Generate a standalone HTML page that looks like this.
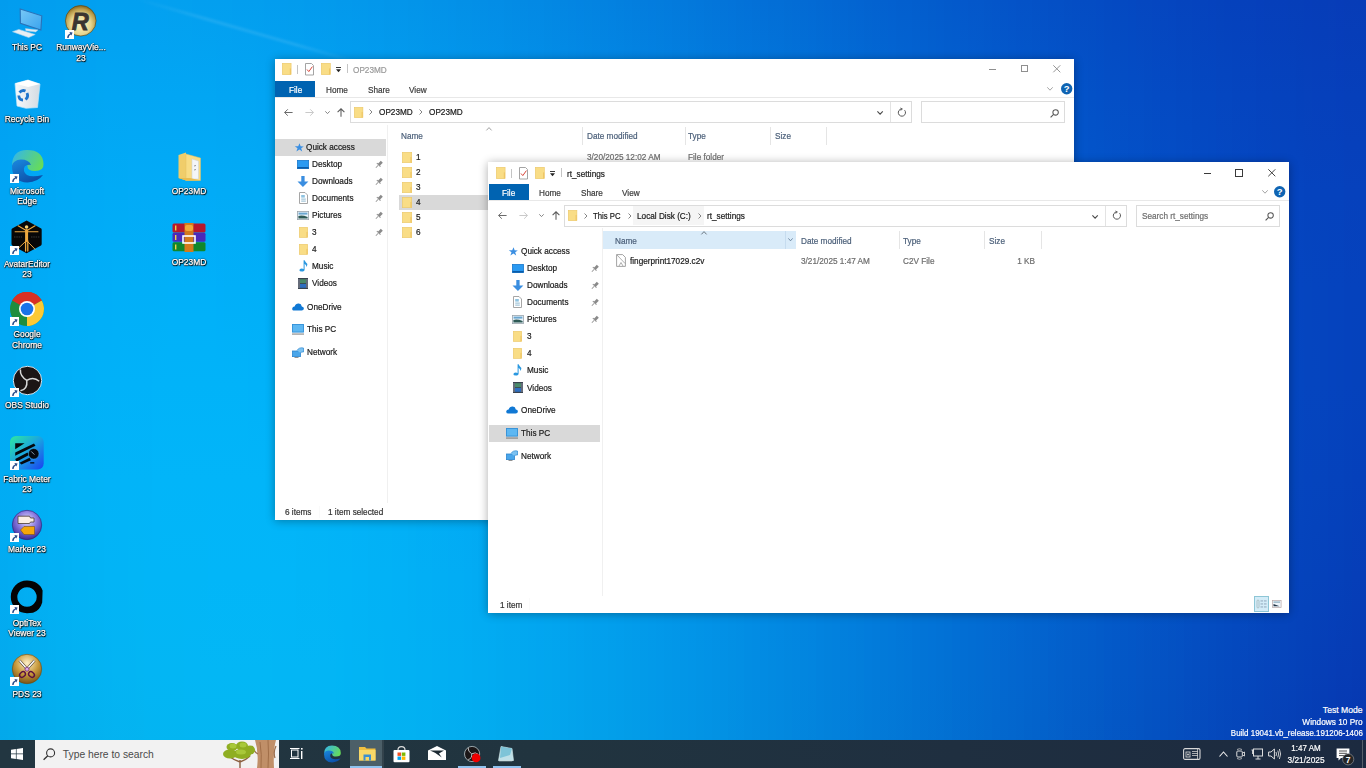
<!DOCTYPE html><html><head><meta charset="utf-8"><title>desktop</title><style>
*{margin:0;padding:0;box-sizing:border-box}
html,body{width:1366px;height:768px;overflow:hidden;position:relative;font-family:"Liberation Sans",sans-serif;background:#0a80e0}
.a{position:absolute}
.bg i{position:absolute;top:0;width:8px;height:768px;display:block}
.t{position:absolute;white-space:nowrap;font-size:8.4px;line-height:10px;color:#1a1a1a;transform:scaleX(.955);transform-origin:0 0;-webkit-text-stroke:0.2px currentColor}
.win{position:absolute;background:#fff}
.dl{position:absolute;color:#fff;font-size:8.7px;line-height:10.5px;text-align:center;white-space:nowrap;
 text-shadow:0 0 1px #000,0 0 1.5px #000,0 1px 1px #000,1px 1px 1px rgba(0,0,0,.8);-webkit-text-stroke:0.25px #fff;transform:scaleX(.97);transform-origin:50% 0}
svg{position:absolute;overflow:visible}
</style></head><body>
<div class="bg">
<i style="left:0px;background:linear-gradient(#029cee 0px,#01a1f2 96px,#01a5f4 192px,#01a9f5 288px,#01abf5 384px,#01acf4 480px,#02abf1 576px,#03aaee 672px,#03a8e9 768px)"></i>
<i style="left:8px;background:linear-gradient(#029def 0px,#01a2f2 96px,#01a6f4 192px,#01a9f5 288px,#01abf5 384px,#01acf4 480px,#02acf2 576px,#03abee 672px,#03a9e9 768px)"></i>
<i style="left:16px;background:linear-gradient(#029def 0px,#01a2f2 96px,#01a7f5 192px,#01aaf6 288px,#01acf6 384px,#01adf4 480px,#02adf2 576px,#03acef 672px,#03aaea 768px)"></i>
<i style="left:24px;background:linear-gradient(#029def 0px,#01a3f2 96px,#01a7f5 192px,#01aaf6 288px,#01adf6 384px,#01aef5 480px,#02aef3 576px,#03adef 672px,#03abea 768px)"></i>
<i style="left:32px;background:linear-gradient(#029eef 0px,#02a3f3 96px,#01a8f5 192px,#01abf6 288px,#01adf6 384px,#01aef5 480px,#02aff3 576px,#03aeef 672px,#03aceb 768px)"></i>
<i style="left:40px;background:linear-gradient(#029eef 0px,#02a4f3 96px,#01a8f5 192px,#01abf6 288px,#01aef7 384px,#01aff5 480px,#02aff3 576px,#03aef0 672px,#03aceb 768px)"></i>
<i style="left:48px;background:linear-gradient(#029eef 0px,#02a4f3 96px,#01a8f5 192px,#01acf7 288px,#01aef7 384px,#01b0f6 480px,#02b0f4 576px,#03aff0 672px,#03adec 768px)"></i>
<i style="left:56px;background:linear-gradient(#029fef 0px,#02a4f3 96px,#01a9f6 192px,#01acf7 288px,#01aff7 384px,#01b0f6 480px,#02b0f4 576px,#03b0f1 672px,#03aeec 768px)"></i>
<i style="left:64px;background:linear-gradient(#029fef 0px,#02a5f3 96px,#01a9f6 192px,#01adf7 288px,#01aff7 384px,#01b1f6 480px,#02b1f4 576px,#03b0f1 672px,#03afed 768px)"></i>
<i style="left:72px;background:linear-gradient(#029fef 0px,#02a5f3 96px,#01aaf6 192px,#01adf7 288px,#01b0f8 384px,#02b1f7 480px,#02b2f5 576px,#03b1f1 672px,#03afed 768px)"></i>
<i style="left:80px;background:linear-gradient(#029ff0 0px,#02a5f3 96px,#01aaf6 192px,#01adf7 288px,#01b0f8 384px,#02b2f7 480px,#02b2f5 576px,#03b2f2 672px,#04b0ed 768px)"></i>
<i style="left:88px;background:linear-gradient(#029ff0 0px,#02a5f3 96px,#01aaf6 192px,#01aef8 288px,#01b0f8 384px,#02b2f7 480px,#02b3f5 576px,#03b2f2 672px,#04b1ee 768px)"></i>
<i style="left:96px;background:linear-gradient(#02a0f0 0px,#02a6f3 96px,#01aaf6 192px,#01aef8 288px,#01b1f8 384px,#02b3f7 480px,#02b3f5 576px,#03b3f2 672px,#04b1ee 768px)"></i>
<i style="left:104px;background:linear-gradient(#02a0f0 0px,#02a6f4 96px,#01abf6 192px,#01aef8 288px,#01b1f8 384px,#02b3f8 480px,#02b4f6 576px,#03b3f3 672px,#04b2ee 768px)"></i>
<i style="left:112px;background:linear-gradient(#02a0f0 0px,#02a6f4 96px,#01abf6 192px,#01aff8 288px,#01b1f8 384px,#02b3f8 480px,#02b4f6 576px,#03b4f3 672px,#04b2ef 768px)"></i>
<i style="left:120px;background:linear-gradient(#02a0f0 0px,#02a6f4 96px,#01abf6 192px,#01aff8 288px,#01b2f9 384px,#02b4f8 480px,#02b4f6 576px,#03b4f3 672px,#04b3ef 768px)"></i>
<i style="left:128px;background:linear-gradient(#02a0f0 0px,#02a6f4 96px,#02abf7 192px,#01aff8 288px,#01b2f9 384px,#02b4f8 480px,#02b5f6 576px,#03b4f3 672px,#04b3ef 768px)"></i>
<i style="left:136px;background:linear-gradient(#02a0f0 0px,#02a6f4 96px,#02abf7 192px,#01aff8 288px,#01b2f9 384px,#02b4f8 480px,#02b5f6 576px,#03b5f3 672px,#04b3ef 768px)"></i>
<i style="left:144px;background:linear-gradient(#03a0f0 0px,#02a6f4 96px,#02abf7 192px,#01aff8 288px,#01b2f9 384px,#02b4f8 480px,#02b5f7 576px,#03b5f4 672px,#03b4f0 768px)"></i>
<i style="left:152px;background:linear-gradient(#03a0f0 0px,#02a6f4 96px,#02abf7 192px,#01aff8 288px,#01b3f9 384px,#02b5f9 480px,#02b5f7 576px,#03b5f4 672px,#03b4f0 768px)"></i>
<i style="left:160px;background:linear-gradient(#03a0f0 0px,#02a6f4 96px,#02abf7 192px,#01b0f8 288px,#01b3f9 384px,#02b5f9 480px,#02b6f7 576px,#03b6f4 672px,#03b5f0 768px)"></i>
<i style="left:168px;background:linear-gradient(#03a0ef 0px,#02a6f4 96px,#02abf7 192px,#01b0f9 288px,#01b3f9 384px,#02b5f9 480px,#02b6f7 576px,#03b6f4 672px,#03b5f0 768px)"></i>
<i style="left:176px;background:linear-gradient(#03a0ef 0px,#02a6f4 96px,#02abf7 192px,#01b0f9 288px,#01b3f9 384px,#02b5f9 480px,#02b6f7 576px,#03b6f4 672px,#03b5f0 768px)"></i>
<i style="left:184px;background:linear-gradient(#03a0ef 0px,#02a6f4 96px,#02abf7 192px,#01b0f9 288px,#01b3f9 384px,#02b5f9 480px,#02b6f7 576px,#03b6f5 672px,#03b5f1 768px)"></i>
<i style="left:192px;background:linear-gradient(#039fef 0px,#02a6f4 96px,#02abf7 192px,#01b0f9 288px,#01b3f9 384px,#02b5f9 480px,#02b6f7 576px,#03b6f5 672px,#03b5f1 768px)"></i>
<i style="left:200px;background:linear-gradient(#039fef 0px,#02a6f3 96px,#02abf7 192px,#01b0f9 288px,#01b3f9 384px,#02b5f9 480px,#02b6f7 576px,#03b7f5 672px,#03b6f1 768px)"></i>
<i style="left:208px;background:linear-gradient(#039fef 0px,#02a6f3 96px,#02abf7 192px,#01b0f9 288px,#01b3f9 384px,#02b5f9 480px,#02b6f8 576px,#03b7f5 672px,#03b6f1 768px)"></i>
<i style="left:216px;background:linear-gradient(#039fef 0px,#02a5f3 96px,#02abf6 192px,#01aff9 288px,#01b3f9 384px,#02b5f9 480px,#02b6f8 576px,#03b7f5 672px,#03b6f1 768px)"></i>
<i style="left:224px;background:linear-gradient(#039fef 0px,#02a5f3 96px,#02abf6 192px,#01aff8 288px,#01b3f9 384px,#02b5f9 480px,#02b6f8 576px,#03b7f5 672px,#03b6f1 768px)"></i>
<i style="left:232px;background:linear-gradient(#039eef 0px,#02a5f3 96px,#02abf6 192px,#01aff8 288px,#01b3f9 384px,#02b5f9 480px,#02b6f8 576px,#03b7f5 672px,#03b6f1 768px)"></i>
<i style="left:240px;background:linear-gradient(#039eee 0px,#02a5f3 96px,#02aaf6 192px,#01aff8 288px,#01b3f9 384px,#02b5f9 480px,#02b6f8 576px,#03b7f5 672px,#03b6f1 768px)"></i>
<i style="left:248px;background:linear-gradient(#039eee 0px,#02a5f3 96px,#02aaf6 192px,#01aff8 288px,#01b2f9 384px,#02b5f9 480px,#02b6f8 576px,#03b7f5 672px,#03b6f1 768px)"></i>
<i style="left:256px;background:linear-gradient(#039eee 0px,#02a4f3 96px,#02aaf6 192px,#01aff8 288px,#01b2f9 384px,#02b5f9 480px,#02b6f8 576px,#03b7f5 672px,#03b6f2 768px)"></i>
<i style="left:264px;background:linear-gradient(#039dee 0px,#02a4f3 96px,#02aaf6 192px,#01aef8 288px,#01b2f9 384px,#02b5f9 480px,#02b6f8 576px,#03b7f5 672px,#03b6f2 768px)"></i>
<i style="left:272px;background:linear-gradient(#039dee 0px,#02a4f2 96px,#02a9f6 192px,#01aef8 288px,#01b2f9 384px,#02b4f9 480px,#02b6f8 576px,#03b6f5 672px,#03b6f2 768px)"></i>
<i style="left:280px;background:linear-gradient(#039cee 0px,#02a3f2 96px,#02a9f6 192px,#01aef8 288px,#01b2f9 384px,#02b4f9 480px,#02b6f8 576px,#03b6f5 672px,#03b6f2 768px)"></i>
<i style="left:288px;background:linear-gradient(#039ced 0px,#02a3f2 96px,#02a9f5 192px,#01aef8 288px,#01b1f9 384px,#02b4f9 480px,#02b6f8 576px,#03b6f5 672px,#03b6f2 768px)"></i>
<i style="left:296px;background:linear-gradient(#039ced 0px,#02a3f2 96px,#02a8f5 192px,#01adf8 288px,#01b1f9 384px,#02b4f9 480px,#02b5f7 576px,#03b6f5 672px,#03b5f2 768px)"></i>
<i style="left:304px;background:linear-gradient(#039bed 0px,#02a2f2 96px,#02a8f5 192px,#01adf7 288px,#01b1f9 384px,#02b3f9 480px,#02b5f7 576px,#03b6f5 672px,#03b5f2 768px)"></i>
<i style="left:312px;background:linear-gradient(#039bed 0px,#02a2f1 96px,#02a8f5 192px,#01adf7 288px,#01b0f8 384px,#02b3f8 480px,#02b5f7 576px,#03b6f5 672px,#03b5f1 768px)"></i>
<i style="left:320px;background:linear-gradient(#039aed 0px,#02a1f1 96px,#02a7f5 192px,#01acf7 288px,#01b0f8 384px,#02b3f8 480px,#02b5f7 576px,#03b5f5 672px,#03b5f1 768px)"></i>
<i style="left:328px;background:linear-gradient(#039aec 0px,#02a1f1 96px,#02a7f5 192px,#01acf7 288px,#01b0f8 384px,#02b3f8 480px,#02b4f7 576px,#03b5f5 672px,#03b5f1 768px)"></i>
<i style="left:336px;background:linear-gradient(#0399ec 0px,#02a0f1 96px,#02a6f4 192px,#01abf7 288px,#01aff8 384px,#02b2f8 480px,#02b4f7 576px,#02b5f5 672px,#03b4f1 768px)"></i>
<i style="left:344px;background:linear-gradient(#0399ec 0px,#02a0f1 96px,#02a6f4 192px,#01abf7 288px,#01aff8 384px,#02b2f8 480px,#02b4f7 576px,#02b4f5 672px,#03b4f1 768px)"></i>
<i style="left:352px;background:linear-gradient(#0398ec 0px,#02a0f0 96px,#02a6f4 192px,#01abf6 288px,#01aff8 384px,#02b1f8 480px,#02b3f7 576px,#02b4f4 672px,#03b4f1 768px)"></i>
<i style="left:360px;background:linear-gradient(#0398eb 0px,#029ff0 96px,#02a5f4 192px,#01aaf6 288px,#01aef7 384px,#02b1f8 480px,#02b3f7 576px,#02b4f4 672px,#03b3f1 768px)"></i>
<i style="left:368px;background:linear-gradient(#0397eb 0px,#029ef0 96px,#02a5f3 192px,#01aaf6 288px,#01aef7 384px,#02b1f7 480px,#02b2f6 576px,#02b3f4 672px,#03b3f1 768px)"></i>
<i style="left:376px;background:linear-gradient(#0397eb 0px,#029ef0 96px,#02a4f3 192px,#01a9f6 288px,#01adf7 384px,#02b0f7 480px,#02b2f6 576px,#02b3f4 672px,#03b3f1 768px)"></i>
<i style="left:384px;background:linear-gradient(#0396ea 0px,#029def 96px,#02a3f3 192px,#01a9f5 288px,#01adf7 384px,#02b0f7 480px,#02b2f6 576px,#02b2f4 672px,#03b2f1 768px)"></i>
<i style="left:392px;background:linear-gradient(#0396ea 0px,#029def 96px,#02a3f3 192px,#01a8f5 288px,#01acf7 384px,#02aff7 480px,#02b1f6 576px,#02b2f4 672px,#03b2f0 768px)"></i>
<i style="left:400px;background:linear-gradient(#0395ea 0px,#029cef 96px,#02a2f2 192px,#01a7f5 288px,#01acf6 384px,#02aff7 480px,#02b1f6 576px,#02b1f3 672px,#03b1f0 768px)"></i>
<i style="left:408px;background:linear-gradient(#0394e9 0px,#029cee 96px,#02a2f2 192px,#01a7f5 288px,#01abf6 384px,#02aef6 480px,#02b0f5 576px,#02b1f3 672px,#03b1f0 768px)"></i>
<i style="left:416px;background:linear-gradient(#0394e9 0px,#029bee 96px,#02a1f2 192px,#01a6f4 288px,#01aaf6 384px,#01adf6 480px,#02aff5 576px,#02b0f3 672px,#03b0f0 768px)"></i>
<i style="left:424px;background:linear-gradient(#0393e9 0px,#029aee 96px,#02a1f2 192px,#01a6f4 288px,#01aaf6 384px,#01adf6 480px,#02aff5 576px,#02b0f3 672px,#03b0f0 768px)"></i>
<i style="left:432px;background:linear-gradient(#0392e9 0px,#029aed 96px,#02a0f1 192px,#01a5f4 288px,#01a9f5 384px,#01acf6 480px,#02aef5 576px,#02aff3 672px,#03afef 768px)"></i>
<i style="left:440px;background:linear-gradient(#0392e8 0px,#0299ed 96px,#029ff1 192px,#01a4f4 288px,#01a9f5 384px,#01acf5 480px,#02aef4 576px,#02aff2 672px,#03afef 768px)"></i>
<i style="left:448px;background:linear-gradient(#0391e8 0px,#0298ed 96px,#029ff1 192px,#01a4f3 288px,#01a8f5 384px,#01abf5 480px,#02adf4 576px,#02aef2 672px,#03aeef 768px)"></i>
<i style="left:456px;background:linear-gradient(#0390e7 0px,#0298ec 96px,#029ef0 192px,#01a3f3 288px,#01a7f4 384px,#01aaf5 480px,#02adf4 576px,#02aef2 672px,#03adef 768px)"></i>
<i style="left:464px;background:linear-gradient(#0390e7 0px,#0297ec 96px,#029df0 192px,#01a2f3 288px,#01a7f4 384px,#01aaf4 480px,#02acf4 576px,#02adf2 672px,#03adee 768px)"></i>
<i style="left:472px;background:linear-gradient(#038fe7 0px,#0296ec 96px,#029df0 192px,#01a2f2 288px,#01a6f4 384px,#01a9f4 480px,#02abf3 576px,#02acf1 672px,#03acee 768px)"></i>
<i style="left:480px;background:linear-gradient(#038ee6 0px,#0295eb 96px,#029cef 192px,#01a1f2 288px,#01a5f3 384px,#01a8f4 480px,#02abf3 576px,#02acf1 672px,#03acee 768px)"></i>
<i style="left:488px;background:linear-gradient(#038de6 0px,#0295eb 96px,#029bef 192px,#01a0f2 288px,#01a5f3 384px,#01a8f4 480px,#02aaf3 576px,#02abf1 672px,#03abee 768px)"></i>
<i style="left:496px;background:linear-gradient(#038de6 0px,#0294eb 96px,#029aef 192px,#01a0f1 288px,#01a4f3 384px,#01a7f3 480px,#02a9f2 576px,#02aaf0 672px,#03aaed 768px)"></i>
<i style="left:504px;background:linear-gradient(#038ce5 0px,#0293ea 96px,#029aee 192px,#019ff1 288px,#01a3f2 384px,#01a6f3 480px,#02a8f2 576px,#02a9f0 672px,#03a9ed 768px)"></i>
<i style="left:512px;background:linear-gradient(#038be5 0px,#0292ea 96px,#0299ee 192px,#019ef1 288px,#01a2f2 384px,#01a6f3 480px,#02a8f2 576px,#02a9f0 672px,#03a9ed 768px)"></i>
<i style="left:520px;background:linear-gradient(#038ae4 0px,#0292ea 96px,#0298ed 192px,#019df0 288px,#01a2f2 384px,#01a5f2 480px,#02a7f1 576px,#02a8ef 672px,#03a8ec 768px)"></i>
<i style="left:528px;background:linear-gradient(#0389e4 0px,#0291e9 96px,#0297ed 192px,#019df0 288px,#01a1f1 384px,#01a4f2 480px,#02a6f1 576px,#02a7ef 672px,#03a7ec 768px)"></i>
<i style="left:536px;background:linear-gradient(#0389e4 0px,#0290e9 96px,#0296ed 192px,#019cef 288px,#01a0f1 384px,#01a3f1 480px,#02a5f1 576px,#02a6ef 672px,#03a6ec 768px)"></i>
<i style="left:544px;background:linear-gradient(#0388e3 0px,#028fe8 96px,#0296ec 192px,#019bef 288px,#019ff1 384px,#01a2f1 480px,#02a5f0 576px,#02a6ee 672px,#03a6eb 768px)"></i>
<i style="left:552px;background:linear-gradient(#0387e3 0px,#028ee8 96px,#0295ec 192px,#019aef 288px,#019ef0 384px,#01a2f1 480px,#02a4f0 576px,#02a5ee 672px,#03a5eb 768px)"></i>
<i style="left:560px;background:linear-gradient(#0386e2 0px,#028ee8 96px,#0294eb 192px,#0199ee 288px,#019ef0 384px,#01a1f0 480px,#02a3f0 576px,#02a4ee 672px,#03a4eb 768px)"></i>
<i style="left:568px;background:linear-gradient(#0385e2 0px,#028de7 96px,#0293eb 192px,#0198ee 288px,#019def 384px,#01a0f0 480px,#02a2ef 576px,#02a3ed 672px,#03a3ea 768px)"></i>
<i style="left:576px;background:linear-gradient(#0384e2 0px,#028ce7 96px,#0292eb 192px,#0198ed 288px,#019cef 384px,#019ff0 480px,#02a1ef 576px,#02a2ed 672px,#03a2ea 768px)"></i>
<i style="left:584px;background:linear-gradient(#0384e1 0px,#028be6 96px,#0291ea 192px,#0197ed 288px,#019bef 384px,#019eef 480px,#02a0ee 576px,#02a1ec 672px,#03a1e9 768px)"></i>
<i style="left:592px;background:linear-gradient(#0383e1 0px,#028ae6 96px,#0291ea 192px,#0196ed 288px,#019aee 384px,#019def 480px,#029fee 576px,#02a0ec 672px,#03a0e9 768px)"></i>
<i style="left:600px;background:linear-gradient(#0382e0 0px,#0289e5 96px,#0290e9 192px,#0195ec 288px,#0199ee 384px,#019cee 480px,#029fee 576px,#02a0ec 672px,#03a0e9 768px)"></i>
<i style="left:608px;background:linear-gradient(#0381e0 0px,#0288e5 96px,#028fe9 192px,#0194ec 288px,#0198ed 384px,#019bee 480px,#029eed 576px,#029feb 672px,#039fe8 768px)"></i>
<i style="left:616px;background:linear-gradient(#0380df 0px,#0288e5 96px,#028ee9 192px,#0193eb 288px,#0197ed 384px,#019bed 480px,#029ded 576px,#029eeb 672px,#039ee8 768px)"></i>
<i style="left:624px;background:linear-gradient(#037fdf 0px,#0287e4 96px,#028de8 192px,#0192eb 288px,#0196ed 384px,#019aed 480px,#029cec 576px,#029dea 672px,#039de7 768px)"></i>
<i style="left:632px;background:linear-gradient(#037ede 0px,#0286e4 96px,#028ce8 192px,#0191ea 288px,#0196ec 384px,#0199ed 480px,#029bec 576px,#029cea 672px,#039ce7 768px)"></i>
<i style="left:640px;background:linear-gradient(#037dde 0px,#0285e3 96px,#028be7 192px,#0190ea 288px,#0195ec 384px,#0198ec 480px,#029aeb 576px,#029be9 672px,#039be6 768px)"></i>
<i style="left:648px;background:linear-gradient(#037cde 0px,#0284e3 96px,#028ae7 192px,#018fea 288px,#0194eb 384px,#0197ec 480px,#0299eb 576px,#029ae9 672px,#039ae6 768px)"></i>
<i style="left:656px;background:linear-gradient(#037cdd 0px,#0283e2 96px,#0289e6 192px,#018fe9 288px,#0193eb 384px,#0196eb 480px,#0298ea 576px,#0299e9 672px,#0399e6 768px)"></i>
<i style="left:664px;background:linear-gradient(#037bdd 0px,#0282e2 96px,#0288e6 192px,#018ee9 288px,#0192ea 384px,#0195eb 480px,#0297ea 576px,#0298e8 672px,#0398e5 768px)"></i>
<i style="left:672px;background:linear-gradient(#037adc 0px,#0281e1 96px,#0287e5 192px,#018de8 288px,#0191ea 384px,#0194ea 480px,#0296e9 576px,#0297e8 672px,#0397e5 768px)"></i>
<i style="left:680px;background:linear-gradient(#0379dc 0px,#0280e1 96px,#0286e5 192px,#018ce8 288px,#0190e9 384px,#0193ea 480px,#0295e9 576px,#0296e7 672px,#0396e4 768px)"></i>
<i style="left:688px;background:linear-gradient(#0378db 0px,#027fe0 96px,#0285e4 192px,#018be7 288px,#018fe9 384px,#0192e9 480px,#0294e9 576px,#0295e7 672px,#0395e4 768px)"></i>
<i style="left:696px;background:linear-gradient(#0377db 0px,#027ee0 96px,#0285e4 192px,#018ae7 288px,#018ee8 384px,#0191e9 480px,#0293e8 576px,#0294e6 672px,#0394e3 768px)"></i>
<i style="left:704px;background:linear-gradient(#0376da 0px,#027ddf 96px,#0284e3 192px,#0189e6 288px,#018de8 384px,#0190e8 480px,#0292e8 576px,#0293e6 672px,#0393e3 768px)"></i>
<i style="left:712px;background:linear-gradient(#0375da 0px,#027cdf 96px,#0283e3 192px,#0188e6 288px,#018ce7 384px,#018fe8 480px,#0291e7 576px,#0292e5 672px,#0392e2 768px)"></i>
<i style="left:720px;background:linear-gradient(#0374d9 0px,#027bde 96px,#0282e2 192px,#0187e5 288px,#018be7 384px,#018ee7 480px,#0290e7 576px,#0291e5 672px,#0391e2 768px)"></i>
<i style="left:728px;background:linear-gradient(#0373d9 0px,#027ade 96px,#0281e2 192px,#0186e5 288px,#018ae6 384px,#018de7 480px,#028fe6 576px,#0290e4 672px,#038fe1 768px)"></i>
<i style="left:736px;background:linear-gradient(#0372d8 0px,#0279dd 96px,#0280e1 192px,#0185e4 288px,#0189e6 384px,#018ce6 480px,#028ee5 576px,#028fe4 672px,#038ee1 768px)"></i>
<i style="left:744px;background:linear-gradient(#0371d8 0px,#0279dd 96px,#027fe1 192px,#0184e4 288px,#0188e5 384px,#018be6 480px,#028de5 576px,#028de3 672px,#038de0 768px)"></i>
<i style="left:752px;background:linear-gradient(#0370d7 0px,#0278dc 96px,#027ee0 192px,#0183e3 288px,#0187e5 384px,#018ae5 480px,#028ce4 576px,#028ce3 672px,#038cdf 768px)"></i>
<i style="left:760px;background:linear-gradient(#036fd7 0px,#0277dc 96px,#027de0 192px,#0182e3 288px,#0186e4 384px,#0189e5 480px,#028ae4 576px,#028be2 672px,#038bdf 768px)"></i>
<i style="left:768px;background:linear-gradient(#036ed6 0px,#0276db 96px,#027cdf 192px,#0181e2 288px,#0185e4 384px,#0188e4 480px,#0289e3 576px,#028ae1 672px,#038ade 768px)"></i>
<i style="left:776px;background:linear-gradient(#036ed6 0px,#0275db 96px,#027bdf 192px,#0180e2 288px,#0184e3 384px,#0186e4 480px,#0288e3 576px,#0289e1 672px,#0389de 768px)"></i>
<i style="left:784px;background:linear-gradient(#036dd5 0px,#0274da 96px,#027ade 192px,#017fe1 288px,#0183e3 384px,#0185e3 480px,#0287e2 576px,#0288e0 672px,#0388dd 768px)"></i>
<i style="left:792px;background:linear-gradient(#036cd5 0px,#0273da 96px,#0279de 192px,#017ee1 288px,#0182e2 384px,#0184e3 480px,#0286e2 576px,#0287e0 672px,#0386dd 768px)"></i>
<i style="left:800px;background:linear-gradient(#036bd4 0px,#0272d9 96px,#0278dd 192px,#017de0 288px,#0180e2 384px,#0183e2 480px,#0285e1 576px,#0286df 672px,#0385dc 768px)"></i>
<i style="left:808px;background:linear-gradient(#036ad4 0px,#0271d9 96px,#0277dd 192px,#017ce0 288px,#017fe1 384px,#0182e1 480px,#0284e1 576px,#0285df 672px,#0384db 768px)"></i>
<i style="left:816px;background:linear-gradient(#0369d3 0px,#0270d8 96px,#0276dc 192px,#017bdf 288px,#017ee1 384px,#0181e1 480px,#0283e0 576px,#0283de 672px,#0383db 768px)"></i>
<i style="left:824px;background:linear-gradient(#0368d3 0px,#026fd8 96px,#0275dc 192px,#017ade 288px,#017de0 384px,#0180e0 480px,#0282df 576px,#0282dd 672px,#0382da 768px)"></i>
<i style="left:832px;background:linear-gradient(#0367d2 0px,#026ed7 96px,#0274db 192px,#0178de 288px,#017cdf 384px,#017fe0 480px,#0281df 576px,#0281dd 672px,#0381da 768px)"></i>
<i style="left:840px;background:linear-gradient(#0366d2 0px,#026dd7 96px,#0273db 192px,#0177dd 288px,#017bdf 384px,#017edf 480px,#027fde 576px,#0280dc 672px,#037fd9 768px)"></i>
<i style="left:848px;background:linear-gradient(#0365d1 0px,#026cd6 96px,#0272da 192px,#0176dd 288px,#017ade 384px,#017ddf 480px,#027ede 576px,#027fdc 672px,#037ed9 768px)"></i>
<i style="left:856px;background:linear-gradient(#0364d1 0px,#026bd6 96px,#0271da 192px,#0275dc 288px,#0179de 384px,#017cde 480px,#027ddd 576px,#027edb 672px,#037dd8 768px)"></i>
<i style="left:864px;background:linear-gradient(#0363d0 0px,#026ad5 96px,#0270d9 192px,#0274dc 288px,#0178dd 384px,#017bde 480px,#027cdd 576px,#027cdb 672px,#037cd7 768px)"></i>
<i style="left:872px;background:linear-gradient(#0362d0 0px,#0269d5 96px,#026fd9 192px,#0273db 288px,#0177dd 384px,#0179dd 480px,#027bdc 576px,#027bda 672px,#037bd7 768px)"></i>
<i style="left:880px;background:linear-gradient(#0361cf 0px,#0268d4 96px,#026ed8 192px,#0272db 288px,#0176dc 384px,#0178dc 480px,#027adb 576px,#027ad9 672px,#0379d6 768px)"></i>
<i style="left:888px;background:linear-gradient(#0360cf 0px,#0367d4 96px,#026dd8 192px,#0271da 288px,#0175dc 384px,#0177dc 480px,#0279db 576px,#0279d9 672px,#0378d5 768px)"></i>
<i style="left:896px;background:linear-gradient(#035fce 0px,#0366d3 96px,#026cd7 192px,#0270da 288px,#0174db 384px,#0276db 480px,#0277da 576px,#0278d8 672px,#0377d5 768px)"></i>
<i style="left:904px;background:linear-gradient(#035fce 0px,#0365d3 96px,#026bd7 192px,#026fd9 288px,#0173da 384px,#0275db 480px,#0276da 576px,#0277d8 672px,#0376d4 768px)"></i>
<i style="left:912px;background:linear-gradient(#035ecd 0px,#0364d2 96px,#026ad6 192px,#026ed9 288px,#0272da 384px,#0274da 480px,#0275d9 576px,#0275d7 672px,#0375d4 768px)"></i>
<i style="left:920px;background:linear-gradient(#035dcd 0px,#0363d2 96px,#0269d5 192px,#026dd8 288px,#0271d9 384px,#0273d9 480px,#0274d8 576px,#0274d6 672px,#0373d3 768px)"></i>
<i style="left:928px;background:linear-gradient(#035ccc 0px,#0362d1 96px,#0268d5 192px,#026cd7 288px,#026fd9 384px,#0272d9 480px,#0273d8 576px,#0273d6 672px,#0372d2 768px)"></i>
<i style="left:936px;background:linear-gradient(#035bcc 0px,#0361d1 96px,#0267d4 192px,#026bd7 288px,#026ed8 384px,#0271d8 480px,#0272d7 576px,#0272d5 672px,#0371d2 768px)"></i>
<i style="left:944px;background:linear-gradient(#035acb 0px,#0360d0 96px,#0266d4 192px,#026ad6 288px,#026dd8 384px,#0270d8 480px,#0271d7 576px,#0271d4 672px,#0370d1 768px)"></i>
<i style="left:952px;background:linear-gradient(#0359cb 0px,#0360d0 96px,#0265d3 192px,#0269d6 288px,#026cd7 384px,#026ed7 480px,#026fd6 576px,#026fd4 672px,#036ed0 768px)"></i>
<i style="left:960px;background:linear-gradient(#0458cb 0px,#035fcf 96px,#0264d3 192px,#0268d5 288px,#026bd6 384px,#026dd7 480px,#026ed5 576px,#026ed3 672px,#036dd0 768px)"></i>
<i style="left:968px;background:linear-gradient(#0457ca 0px,#035ecf 96px,#0263d2 192px,#0267d5 288px,#026ad6 384px,#026cd6 480px,#026dd5 576px,#026dd2 672px,#036ccf 768px)"></i>
<i style="left:976px;background:linear-gradient(#0457ca 0px,#035dce 96px,#0262d2 192px,#0266d4 288px,#0269d5 384px,#026bd5 480px,#026cd4 576px,#026cd2 672px,#036bce 768px)"></i>
<i style="left:984px;background:linear-gradient(#0456c9 0px,#035cce 96px,#0261d1 192px,#0265d4 288px,#0268d5 384px,#026ad5 480px,#026bd4 576px,#036bd1 672px,#036ace 768px)"></i>
<i style="left:992px;background:linear-gradient(#0455c9 0px,#035bcd 96px,#0260d1 192px,#0264d3 288px,#0267d4 384px,#0269d4 480px,#026ad3 576px,#036ad1 672px,#0368cd 768px)"></i>
<i style="left:1000px;background:linear-gradient(#0454c8 0px,#035acd 96px,#025fd0 192px,#0263d2 288px,#0266d4 384px,#0268d4 480px,#0269d2 576px,#0368d0 672px,#0367cc 768px)"></i>
<i style="left:1008px;background:linear-gradient(#0453c8 0px,#0359cc 96px,#025ed0 192px,#0262d2 288px,#0265d3 384px,#0267d3 480px,#0268d2 576px,#0367cf 672px,#0366cc 768px)"></i>
<i style="left:1016px;background:linear-gradient(#0452c7 0px,#0358cc 96px,#025dcf 192px,#0261d1 288px,#0264d2 384px,#0266d2 480px,#0266d1 576px,#0366cf 672px,#0365cb 768px)"></i>
<i style="left:1024px;background:linear-gradient(#0452c7 0px,#0358cb 96px,#025ccf 192px,#0260d1 288px,#0263d2 384px,#0265d2 480px,#0265d0 576px,#0365ce 672px,#0363ca 768px)"></i>
<i style="left:1032px;background:linear-gradient(#0451c6 0px,#0357cb 96px,#035cce 192px,#025fd0 288px,#0262d1 384px,#0264d1 480px,#0264d0 576px,#0364cd 672px,#0362ca 768px)"></i>
<i style="left:1040px;background:linear-gradient(#0450c6 0px,#0356ca 96px,#035bce 192px,#025ed0 288px,#0261d1 384px,#0263d1 480px,#0263cf 576px,#0363cd 672px,#0361c9 768px)"></i>
<i style="left:1048px;background:linear-gradient(#044fc5 0px,#0355ca 96px,#035acd 192px,#025dcf 288px,#0260d0 384px,#0261d0 480px,#0262cf 576px,#0361cc 672px,#0460c8 768px)"></i>
<i style="left:1056px;background:linear-gradient(#044fc5 0px,#0354c9 96px,#0359cd 192px,#025ccf 288px,#025fd0 384px,#0260cf 480px,#0261ce 576px,#0360cb 672px,#045fc8 768px)"></i>
<i style="left:1064px;background:linear-gradient(#044ec4 0px,#0353c9 96px,#0358cc 192px,#025cce 288px,#025ecf 384px,#025fcf 480px,#0360cd 576px,#035fcb 672px,#045dc7 768px)"></i>
<i style="left:1072px;background:linear-gradient(#044dc4 0px,#0353c8 96px,#0357cc 192px,#025bce 288px,#025dce 384px,#025ece 480px,#035fcd 576px,#035eca 672px,#045cc6 768px)"></i>
<i style="left:1080px;background:linear-gradient(#044cc3 0px,#0352c8 96px,#0356cb 192px,#025acd 288px,#025cce 384px,#025dce 480px,#035ecc 576px,#035dc9 672px,#045bc6 768px)"></i>
<i style="left:1088px;background:linear-gradient(#044cc3 0px,#0351c7 96px,#0355cb 192px,#0359cd 288px,#025bcd 384px,#025ccd 480px,#035dcc 576px,#035cc9 672px,#045ac5 768px)"></i>
<i style="left:1096px;background:linear-gradient(#044bc3 0px,#0350c7 96px,#0355ca 192px,#0358cc 288px,#025acd 384px,#025bcc 480px,#035bcb 576px,#035bc8 672px,#0459c4 768px)"></i>
<i style="left:1104px;background:linear-gradient(#044ac2 0px,#044fc6 96px,#0354ca 192px,#0357cb 288px,#0259cc 384px,#035acc 480px,#035aca 576px,#0359c8 672px,#0457c4 768px)"></i>
<i style="left:1112px;background:linear-gradient(#0449c2 0px,#044fc6 96px,#0353c9 192px,#0356cb 288px,#0358cc 384px,#0359cb 480px,#0359ca 576px,#0358c7 672px,#0456c3 768px)"></i>
<i style="left:1120px;background:linear-gradient(#0449c1 0px,#044ec5 96px,#0352c9 192px,#0355ca 288px,#0357cb 384px,#0358cb 480px,#0358c9 576px,#0357c6 672px,#0455c2 768px)"></i>
<i style="left:1128px;background:linear-gradient(#0448c1 0px,#044dc5 96px,#0351c8 192px,#0354ca 288px,#0356cb 384px,#0357ca 480px,#0357c8 576px,#0356c6 672px,#0454c2 768px)"></i>
<i style="left:1136px;background:linear-gradient(#0547c0 0px,#044dc5 96px,#0351c8 192px,#0354c9 288px,#0355ca 384px,#0356c9 480px,#0356c8 576px,#0455c5 672px,#0453c1 768px)"></i>
<i style="left:1144px;background:linear-gradient(#0547c0 0px,#044cc4 96px,#0350c7 192px,#0353c9 288px,#0355c9 384px,#0355c9 480px,#0355c7 576px,#0454c4 672px,#0451c0 768px)"></i>
<i style="left:1152px;background:linear-gradient(#0546c0 0px,#044bc4 96px,#034fc7 192px,#0352c8 288px,#0354c9 384px,#0354c8 480px,#0354c7 576px,#0453c4 672px,#0450c0 768px)"></i>
<i style="left:1160px;background:linear-gradient(#0546bf 0px,#044ac3 96px,#034ec6 192px,#0351c8 288px,#0353c8 384px,#0353c8 480px,#0353c6 576px,#0452c3 672px,#044fbf 768px)"></i>
<i style="left:1168px;background:linear-gradient(#0545bf 0px,#044ac3 96px,#044ec6 192px,#0350c7 288px,#0352c8 384px,#0353c7 480px,#0352c5 576px,#0451c2 672px,#044ebe 768px)"></i>
<i style="left:1176px;background:linear-gradient(#0544be 0px,#0449c2 96px,#044dc5 192px,#0350c7 288px,#0351c7 384px,#0352c7 480px,#0351c5 576px,#0450c2 672px,#054dbd 768px)"></i>
<i style="left:1184px;background:linear-gradient(#0544be 0px,#0449c2 96px,#044cc5 192px,#034fc6 288px,#0350c7 384px,#0351c6 480px,#0350c4 576px,#044ec1 672px,#054cbd 768px)"></i>
<i style="left:1192px;background:linear-gradient(#0543be 0px,#0448c1 96px,#044bc4 192px,#034ec6 288px,#034fc6 384px,#0350c5 480px,#044fc4 576px,#044dc0 672px,#054bbc 768px)"></i>
<i style="left:1200px;background:linear-gradient(#0543bd 0px,#0447c1 96px,#044bc4 192px,#034dc5 288px,#034fc6 384px,#034fc5 480px,#044ec3 576px,#044cc0 672px,#054abb 768px)"></i>
<i style="left:1208px;background:linear-gradient(#0542bd 0px,#0447c1 96px,#044ac3 192px,#044cc5 288px,#034ec5 384px,#034ec4 480px,#044dc2 576px,#044bbf 672px,#0548bb 768px)"></i>
<i style="left:1216px;background:linear-gradient(#0542bc 0px,#0546c0 96px,#0449c3 192px,#044cc4 288px,#034dc5 384px,#044dc4 480px,#044cc2 576px,#044abe 672px,#0547ba 768px)"></i>
<i style="left:1224px;background:linear-gradient(#0541bc 0px,#0546c0 96px,#0449c2 192px,#044bc4 288px,#044cc4 384px,#044cc3 480px,#044bc1 576px,#0449be 672px,#0546b9 768px)"></i>
<i style="left:1232px;background:linear-gradient(#0541bc 0px,#0545bf 96px,#0448c2 192px,#044ac3 288px,#044bc4 384px,#044bc3 480px,#044ac1 576px,#0448bd 672px,#0545b9 768px)"></i>
<i style="left:1240px;background:linear-gradient(#0640bb 0px,#0544bf 96px,#0448c2 192px,#044ac3 288px,#044bc3 384px,#044bc2 480px,#044ac0 576px,#0547bd 672px,#0544b8 768px)"></i>
<i style="left:1248px;background:linear-gradient(#0640bb 0px,#0544bf 96px,#0447c1 192px,#0449c2 288px,#044ac3 384px,#044ac2 480px,#0449bf 576px,#0546bc 672px,#0543b7 768px)"></i>
<i style="left:1256px;background:linear-gradient(#063fbb 0px,#0543be 96px,#0446c1 192px,#0448c2 288px,#0449c2 384px,#0449c1 480px,#0448bf 576px,#0545bb 672px,#0542b7 768px)"></i>
<i style="left:1264px;background:linear-gradient(#063fba 0px,#0543be 96px,#0446c0 192px,#0448c1 288px,#0448c2 384px,#0448c0 480px,#0447be 576px,#0544bb 672px,#0641b6 768px)"></i>
<i style="left:1272px;background:linear-gradient(#063fba 0px,#0543bd 96px,#0545c0 192px,#0447c1 288px,#0448c1 384px,#0447c0 480px,#0446be 576px,#0544ba 672px,#0640b5 768px)"></i>
<i style="left:1280px;background:linear-gradient(#063eba 0px,#0542bd 96px,#0545bf 192px,#0446c1 288px,#0447c1 384px,#0447bf 480px,#0545bd 576px,#0543b9 672px,#063fb5 768px)"></i>
<i style="left:1288px;background:linear-gradient(#063eb9 0px,#0542bd 96px,#0544bf 192px,#0446c0 288px,#0446c0 384px,#0446bf 480px,#0544bc 576px,#0542b9 672px,#063eb4 768px)"></i>
<i style="left:1296px;background:linear-gradient(#063eb9 0px,#0541bc 96px,#0544bf 192px,#0545c0 288px,#0446c0 384px,#0545be 480px,#0543bc 576px,#0541b8 672px,#063db3 768px)"></i>
<i style="left:1304px;background:linear-gradient(#063db9 0px,#0641bc 96px,#0543be 192px,#0545bf 288px,#0545bf 384px,#0544be 480px,#0543bb 576px,#0540b8 672px,#063cb3 768px)"></i>
<i style="left:1312px;background:linear-gradient(#063db8 0px,#0640bc 96px,#0543be 192px,#0544bf 288px,#0545bf 384px,#0544bd 480px,#0542bb 576px,#053fb7 672px,#063bb2 768px)"></i>
<i style="left:1320px;background:linear-gradient(#063db8 0px,#0640bb 96px,#0542bd 192px,#0544be 288px,#0544be 384px,#0543bd 480px,#0541ba 576px,#063eb6 672px,#063ab1 768px)"></i>
<i style="left:1328px;background:linear-gradient(#073db8 0px,#0640bb 96px,#0542bd 192px,#0543be 288px,#0543be 384px,#0542bc 480px,#0540ba 576px,#063db6 672px,#0639b1 768px)"></i>
<i style="left:1336px;background:linear-gradient(#073cb8 0px,#063fbb 96px,#0542bd 192px,#0543be 288px,#0543bd 384px,#0542bc 480px,#0540b9 576px,#063cb5 672px,#0738b0 768px)"></i>
<i style="left:1344px;background:linear-gradient(#073cb7 0px,#063fba 96px,#0641bc 192px,#0542bd 288px,#0542bd 384px,#0541bb 480px,#053fb8 576px,#063cb5 672px,#0737b0 768px)"></i>
<i style="left:1352px;background:linear-gradient(#073cb7 0px,#063fba 96px,#0641bc 192px,#0542bd 288px,#0542bc 384px,#0540bb 480px,#063eb8 576px,#063bb4 672px,#0736af 768px)"></i>
<i style="left:1360px;background:linear-gradient(#073cb7 0px,#063fba 96px,#0641bc 192px,#0541bc 288px,#0541bc 384px,#0540ba 480px,#063db7 576px,#063ab3 672px,#0736ae 768px)"></i>
<div class="a" style="left:135px;top:-3px;width:240px;height:3px;background:linear-gradient(90deg,rgba(255,255,255,0),rgba(255,255,255,.10) 30%,rgba(255,255,255,.10) 70%,rgba(255,255,255,0));transform:rotate(16deg);transform-origin:0 0;filter:blur(1px)"></div>
</div>
<svg style="left:12.0px;top:7.5px" width="31" height="30" viewBox="0 0 31 30"><defs><linearGradient id="pcs" x1="0" y1="0" x2="1" y2="1"><stop offset="0" stop-color="#78c8f6"/><stop offset="1" stop-color="#3aa4ee"/></linearGradient></defs><path d="M8.2 1 L29.8 7.8 L28.9 21.9 L8.4 15.3Z" fill="url(#pcs)" stroke="#2a72b8" stroke-width="1.1"/><path d="M13.4 20.6 L26 21.9 L23.7 24 L13.8 22.7Z" fill="#e4ecf2" stroke="#9ccbea" stroke-width="0.5"/><path d="M0.5 23.7 L6.8 21.4 L23.2 26.5 L16.7 29.5Z" fill="#e8eef3" stroke="#a8d4ee" stroke-width="0.6"/></svg>
<div class="dl" style="left:-13.0px;top:42.2px;width:80px">This PC</div>
<svg style="left:65.0px;top:5.0px" width="31.5" height="31.5" viewBox="0 0 31.5 31.5"><defs><radialGradient id="rg1" cx="0.5" cy="0.62" r="0.6"><stop offset="0" stop-color="#fbf6c8"/><stop offset="0.55" stop-color="#e6d690"/><stop offset="0.85" stop-color="#b89a48"/><stop offset="1" stop-color="#8a6a22"/></radialGradient></defs><circle cx="15.75" cy="15.75" r="15.3" fill="url(#rg1)" stroke="#5a4a1a" stroke-width="0.7"/><text x="15.2" y="24.6" font-family="Liberation Sans" font-weight="bold" font-style="italic" font-size="23.5" fill="#3a3530" stroke="#3a3530" stroke-width="0.8" text-anchor="middle">R</text></svg>
<svg style="left:64.5px;top:30.0px" width="9" height="9" viewBox="0 0 9 9"><rect x="0" y="0" width="9" height="9" fill="#fff"/><path d="M2.2 8 Q2 4.6 5.2 3.4 L4.4 2 L7.6 2.6 L6.4 5.6 L5.8 4.6 Q3.8 5.4 3.6 8Z" fill="#2c4f8c"/></svg>
<div class="dl" style="left:41.0px;top:42.1px;width:80px">RunwayVie...</div>
<div class="dl" style="left:41.0px;top:52.8px;width:80px">23</div>
<svg style="left:14.0px;top:78.5px" width="27" height="29.5" viewBox="0 0 27 29.5"><defs><linearGradient id="rb" x1="0" x2="1"><stop offset="0" stop-color="#f7f9fb"/><stop offset="1" stop-color="#d3dbe2"/></linearGradient></defs><path d="M1 4.5 L14 1 L26 5 L23.5 28.5 L12 29.3 L3 27Z" fill="url(#rb)" stroke="#bfe6fb" stroke-width="0.7"/><path d="M1 4.5 L14 1 L26 5 L14 8Z" fill="#fff"/><path d="M5.5 13.5 Q8 10.5 11.5 12 M13 14 Q14.8 18 11.5 20.5 M9 21 Q5 21 4.8 16.5" fill="none" stroke="#1f74cc" stroke-width="2.8"/></svg>
<div class="dl" style="left:-13.0px;top:113.8px;width:80px">Recycle Bin</div>
<svg style="left:10.0px;top:148.8px" width="34.2" height="33.6" viewBox="0 0 34.2 33.6"><defs><linearGradient id="eg" x1="0" y1="0.2" x2="1" y2="0.6"><stop offset="0" stop-color="#35b6e8"/><stop offset="1" stop-color="#66dc5a"/></linearGradient><linearGradient id="eb" x1="0" y1="0" x2="0.6" y2="1"><stop offset="0" stop-color="#1a8ae0"/><stop offset="1" stop-color="#0c4fa8"/></linearGradient></defs><path d="M2 17 Q2 1 17 1 Q33 1 33.5 15 Q34 22 25 22 Q17.5 22 17.5 17.5 Q17.5 12 12 12 Q4 12 2 17Z" fill="url(#eg)"/><path d="M2 17 Q3 11 11 10.5 Q19 10.5 21 16 Q13 15 14 22 Q16 30 33 26 Q28 33 17.5 33.5 Q2 33 2 17Z" fill="url(#eb)"/></svg>
<svg style="left:10.2px;top:173.5px" width="9" height="9" viewBox="0 0 9 9"><rect x="0" y="0" width="9" height="9" fill="#fff"/><path d="M2.2 8 Q2 4.6 5.2 3.4 L4.4 2 L7.6 2.6 L6.4 5.6 L5.8 4.6 Q3.8 5.4 3.6 8Z" fill="#2c4f8c"/></svg>
<div class="dl" style="left:-13.0px;top:185.8px;width:80px">Microsoft</div>
<div class="dl" style="left:-13.0px;top:196.3px;width:80px">Edge</div>
<svg style="left:11.4px;top:220.3px" width="31.2" height="33.8" viewBox="0 0 31.2 33.8"><defs><linearGradient id="av" x1="0" y1="0" x2="0" y2="1"><stop offset="0" stop-color="#f8c860"/><stop offset="1" stop-color="#d88a30"/></linearGradient></defs><path d="M15.6 0.5 L30.2 8.6 Q30.7 9 30.7 10 L30.7 24 Q30.7 25 30 25.4 L15.6 33.3 L1.2 25.4 Q0.5 25 0.5 24 L0.5 10 Q0.5 9 1.2 8.6Z" fill="#070707"/><path d="M3 17 H11 M20 17 H28.5" stroke="#5a5a5a" stroke-width="0.6" stroke-dasharray="1.5 0.8"/><g stroke="#eca840" stroke-linecap="round" fill="none"><path d="M15.6 10.5 V20.5" stroke-width="3"/><path d="M15.6 10.8 L7.1 5.8 M15.6 10.8 L24.1 5.8 M4.1 11.7 H27" stroke-width="1.1"/><path d="M14.6 21 V31 M16.8 21 V31" stroke-width="1.3"/><path d="M15.6 20.5 L8.2 27.5 M15.6 20.5 L24.1 29.3" stroke-width="1"/></g><circle cx="15.6" cy="7" r="1.8" fill="#f8d070"/></svg>
<svg style="left:10.3px;top:245.5px" width="9" height="9" viewBox="0 0 9 9"><rect x="0" y="0" width="9" height="9" fill="#fff"/><path d="M2.2 8 Q2 4.6 5.2 3.4 L4.4 2 L7.6 2.6 L6.4 5.6 L5.8 4.6 Q3.8 5.4 3.6 8Z" fill="#2c4f8c"/></svg>
<div class="dl" style="left:-13.0px;top:258.8px;width:80px">AvatarEditor</div>
<div class="dl" style="left:-13.0px;top:269.4px;width:80px">23</div>
<svg style="left:10.0px;top:292.3px" width="34" height="34" viewBox="0 0 34 34"><circle cx="17" cy="17" r="17" fill="#1e8e3e"/><path d="M17 17 L2.3 8.5 A17 17 0 0 1 31.7 8.5Z" fill="#d93025"/><path d="M17 17 L31.7 8.5 A17 17 0 0 1 17 34Z" fill="#fcc934"/><path d="M17 8.5 H31.7 A17 17 0 0 0 2.3 8.5Z" fill="#d93025"/><circle cx="17" cy="17" r="8" fill="#fff"/><circle cx="17" cy="17" r="6.3" fill="#1a73e8"/></svg>
<svg style="left:10.2px;top:317.4px" width="9" height="9" viewBox="0 0 9 9"><rect x="0" y="0" width="9" height="9" fill="#fff"/><path d="M2.2 8 Q2 4.6 5.2 3.4 L4.4 2 L7.6 2.6 L6.4 5.6 L5.8 4.6 Q3.8 5.4 3.6 8Z" fill="#2c4f8c"/></svg>
<div class="dl" style="left:-13.0px;top:329.4px;width:80px">Google</div>
<div class="dl" style="left:-13.0px;top:340.1px;width:80px">Chrome</div>
<svg style="left:12.5px;top:366.0px" width="29" height="29" viewBox="0 0 29 29"><circle cx="14.5" cy="14.5" r="14.2" fill="#1b1515" stroke="#e6f4ff" stroke-width="0.9"/><path d="M13.8 14.3 Q6.9 10.4 7.4 3.4 M13.8 14.3 Q20.7 10.4 26.2 15.3 M13.8 14.3 Q14.8 23.2 7.4 24.7" fill="none" stroke="#d8d8d8" stroke-width="1.5"/></svg>
<svg style="left:10.2px;top:388.0px" width="9" height="9" viewBox="0 0 9 9"><rect x="0" y="0" width="9" height="9" fill="#fff"/><path d="M2.2 8 Q2 4.6 5.2 3.4 L4.4 2 L7.6 2.6 L6.4 5.6 L5.8 4.6 Q3.8 5.4 3.6 8Z" fill="#2c4f8c"/></svg>
<div class="dl" style="left:-13.0px;top:400.4px;width:80px">OBS Studio</div>
<svg style="left:10.0px;top:436.2px" width="33.7" height="33.6" viewBox="0 0 33.7 33.6"><defs><linearGradient id="fm" x1="0" y1="0" x2="1" y2="1"><stop offset="0" stop-color="#2ee8a0"/><stop offset="0.5" stop-color="#1aa2e2"/><stop offset="1" stop-color="#1a40f0"/></linearGradient></defs><rect x="0" y="0" width="33.7" height="33.6" rx="6" fill="url(#fm)"/><path d="M5.2 7.3 H14.6 L5.2 13.2Z M5.2 16.5 L24 7.6 L25.5 9.8 L5.2 19.8Z M5.2 23 L17.5 16.5 L19 19 L6.5 25.8Z M9.5 26.8 L19.5 21.8 L21 24.3 L11.5 28.6Z M20.2 26.2 H24.3 V27.6 H20.2Z" fill="#05080c"/><circle cx="23.7" cy="17.8" r="5.3" fill="#05080c" stroke="#40a8e0" stroke-width="0.5"/><path d="M21.2 15.4 L24.4 18.6" stroke="#9ab" stroke-width="0.9"/></svg>
<svg style="left:10.3px;top:461.0px" width="9" height="9" viewBox="0 0 9 9"><rect x="0" y="0" width="9" height="9" fill="#fff"/><path d="M2.2 8 Q2 4.6 5.2 3.4 L4.4 2 L7.6 2.6 L6.4 5.6 L5.8 4.6 Q3.8 5.4 3.6 8Z" fill="#2c4f8c"/></svg>
<div class="dl" style="left:-13.0px;top:473.8px;width:80px">Fabric Meter</div>
<div class="dl" style="left:-13.0px;top:484.4px;width:80px">23</div>
<svg style="left:12.3px;top:510.0px" width="30" height="30" viewBox="0 0 30 30"><defs><radialGradient id="mk" cx="0.5" cy="0.35" r="0.65"><stop offset="0" stop-color="#e8e4ff"/><stop offset="0.5" stop-color="#8a7ae0"/><stop offset="1" stop-color="#3a2c98"/></radialGradient></defs><circle cx="15" cy="15" r="14.7" fill="url(#mk)" stroke="#2a2070" stroke-width="0.6"/><path d="M6 6.2 H17.5 L18.5 8 H22 V12 H18.5 L17.5 13.5 H6Z" fill="#fbefe4" stroke="#4a3a30" stroke-width="0.8"/><path d="M8.5 20 L12 16.5 H22.5 V24.5 H12Z" fill="#f5a60a" stroke="#7a5010" stroke-width="0.6"/></svg>
<svg style="left:10.0px;top:533.0px" width="9" height="9" viewBox="0 0 9 9"><rect x="0" y="0" width="9" height="9" fill="#fff"/><path d="M2.2 8 Q2 4.6 5.2 3.4 L4.4 2 L7.6 2.6 L6.4 5.6 L5.8 4.6 Q3.8 5.4 3.6 8Z" fill="#2c4f8c"/></svg>
<div class="dl" style="left:-13.0px;top:543.8px;width:80px">Marker 23</div>
<svg style="left:10.0px;top:580.0px" width="34" height="34" viewBox="0 0 34 34"><path fill-rule="evenodd" fill="#040404" d="M17 0.6 C25 0.6 30.5 4.5 32.6 10.5 L32.2 22.5 Q30 30.5 23 32.8 L17 33.2 C8 33.2 0.8 26 0.8 17 C0.8 8 8 0.6 17 0.6Z M17 7.3 A9.7 9.7 0 1 0 17.01 7.3Z"/></svg>
<svg style="left:10.2px;top:605.0px" width="9" height="9" viewBox="0 0 9 9"><rect x="0" y="0" width="9" height="9" fill="#fff"/><path d="M2.2 8 Q2 4.6 5.2 3.4 L4.4 2 L7.6 2.6 L6.4 5.6 L5.8 4.6 Q3.8 5.4 3.6 8Z" fill="#2c4f8c"/></svg>
<div class="dl" style="left:-13.0px;top:617.8px;width:80px">OptiTex</div>
<div class="dl" style="left:-13.0px;top:628.4px;width:80px">Viewer 23</div>
<svg style="left:12.3px;top:653.6px" width="30" height="30" viewBox="0 0 30 30"><defs><radialGradient id="pd" cx="0.5" cy="0.3" r="0.7"><stop offset="0" stop-color="#fcf0c8"/><stop offset="0.55" stop-color="#c89a3c"/><stop offset="1" stop-color="#7a5418"/></radialGradient></defs><circle cx="15" cy="15" r="14.7" fill="url(#pd)" stroke="#6a4a10" stroke-width="0.6"/><path d="M7.5 6.5 L15 15 M22.5 6.5 L15 15" stroke="#3a2a1a" stroke-width="2.6"/><path d="M7.5 6.5 L15 15 M22.5 6.5 L15 15" stroke="#fff" stroke-width="1.5"/><ellipse cx="10.5" cy="20.5" rx="3.2" ry="2.4" transform="rotate(-40 10.5 20.5)" fill="none" stroke="#5a1040" stroke-width="1.4"/><ellipse cx="19.5" cy="20.5" rx="3.2" ry="2.4" transform="rotate(40 19.5 20.5)" fill="none" stroke="#5a1040" stroke-width="1.4"/><circle cx="15" cy="15.2" r="2" fill="#d9a8e8" stroke="#6a1a60" stroke-width="0.7"/></svg>
<svg style="left:10.2px;top:676.7px" width="9" height="9" viewBox="0 0 9 9"><rect x="0" y="0" width="9" height="9" fill="#fff"/><path d="M2.2 8 Q2 4.6 5.2 3.4 L4.4 2 L7.6 2.6 L6.4 5.6 L5.8 4.6 Q3.8 5.4 3.6 8Z" fill="#2c4f8c"/></svg>
<div class="dl" style="left:-13.0px;top:688.8px;width:80px">PDS 23</div>
<svg style="left:178.0px;top:152.0px" width="23" height="29" viewBox="0 0 23 29"><path d="M0.5 3 L8 0.5 L8 28.5 L0.5 26Z" fill="#f0cd6a"/><path d="M8 2 L22.5 6 V28.5 H8Z" fill="#f8dc84" stroke="#e6c060" stroke-width="0.5"/><path d="M14 7 L20.5 9 V27 H14Z" fill="#f4f6f8" stroke="#c8d0d8" stroke-width="0.5"/><path d="M16 14 L18 13.5 M16 18 L18 17.5" stroke="#555" stroke-width="0.6"/><path d="M0.5 26 L8 28.5 L22.5 28.5 L12 26Z" fill="#e8bd50"/></svg>
<div class="dl" style="left:149.0px;top:185.8px;width:80px">OP23MD</div>
<svg style="left:172.0px;top:223.0px" width="34" height="29" viewBox="0 0 34 29"><g><rect x="0.5" y="0.5" width="33" height="9" rx="1.5" fill="#b8182c"/><rect x="0.5" y="9.8" width="33" height="9" rx="1.5" fill="#4a2ab8"/><rect x="0.5" y="19.2" width="33" height="9" rx="1.5" fill="#11872c"/><rect x="3" y="2.5" width="1.4" height="5" fill="#f3d048"/><rect x="3" y="12" width="1.4" height="5" fill="#f3d048"/><rect x="3" y="21.5" width="1.4" height="5" fill="#f3d048"/><rect x="12.5" y="0" width="9" height="29" fill="#d47a1c"/><rect x="11" y="13" width="12" height="7" fill="none" stroke="#fff" stroke-width="1.6"/><rect x="13" y="2" width="8" height="6" rx="2" fill="#f2a838"/></g></svg>
<div class="dl" style="left:149.0px;top:257.2px;width:80px">OP23MD</div>
<div class="win" style="left:275px;top:59px;width:799px;height:461px;box-shadow:0 1px 9px rgba(0,0,0,.33);"></div>
<svg style="left:282.0px;top:63.0px" width="9.4" height="12" viewBox="0 0 9.4 12"><rect x="0.3" y="0.3" width="8.8" height="11.4" fill="#f9dd86" stroke="#ecc767" stroke-width="0.6"/><rect x="7.8" y="5.4" width="1.2" height="6" fill="#efc665"/></svg>
<div class="a" style="left:297.0px;top:65.0px;width:0.8px;height:9.0px;background:#c4c4c4"></div>
<svg style="left:305.0px;top:63.0px" width="9" height="12.5" viewBox="0 0 9 12.5"><path d="M0.5 0.5 H6.5 L8.5 2.5 V12 H0.5Z" fill="#fff" stroke="#9a9a9a" stroke-width="0.9"/><path d="M2 6.5 L3.8 8.6 L7.4 3.6" fill="none" stroke="#d9463a" stroke-width="1"/></svg>
<svg style="left:320.8px;top:63.0px" width="9.6" height="12" viewBox="0 0 9.6 12"><rect x="0.3" y="0.3" width="9" height="11.4" fill="#f9dd86" stroke="#ecc767" stroke-width="0.6"/><rect x="8" y="5.4" width="1.2" height="6" fill="#efc665"/></svg>
<svg style="left:336.0px;top:67.0px" width="5" height="6" viewBox="0 0 5 6"><rect x="0" y="0" width="5" height="0.9" fill="#222"/><path d="M0 2.2 H5 L2.5 5.2Z" fill="#222"/></svg>
<div class="a" style="left:347.0px;top:64.0px;width:0.8px;height:9.0px;background:#c4c4c4"></div>
<div class="t" style="left:352.5px;top:64.6px;font-size:8.60px;color:#9a9a9a;">OP23MD</div>
<div class="a" style="left:988.5px;top:68.8px;width:7.8px;height:1.0px;background:#8f8f8f"></div>
<div class="a" style="left:1020.5px;top:65.2px;width:7.2px;height:7.2px;border:1px solid #8f8f8f"></div>
<svg style="left:1052.8px;top:65.2px" width="7.6" height="7.6" viewBox="0 0 7.6 7.6"><path d="M0.3 0.3 L7.3 7.3 M7.3 0.3 L0.3 7.3" stroke="#8f8f8f" stroke-width="0.95"/></svg>
<div class="a" style="left:275.3px;top:80.5px;width:40.0px;height:16.5px;background:#0063b1"></div>
<div class="t" style="left:288.5px;top:84.8px;font-size:8.60px;color:#fff;">File</div>
<div class="t" style="left:325.5px;top:85.0px;font-size:8.60px;color:#3a3a3a;">Home</div>
<div class="t" style="left:367.5px;top:85.0px;font-size:8.60px;color:#3a3a3a;">Share</div>
<div class="t" style="left:408.5px;top:85.0px;font-size:8.60px;color:#3a3a3a;">View</div>
<svg style="left:1047.0px;top:86.5px" width="6" height="4" viewBox="0 0 6 4"><path d="M0.3 0.3 L3 3.2 L5.7 0.3" fill="none" stroke="#9a9a9a" stroke-width="0.9"/></svg>
<svg style="left:1060.6px;top:82.8px" width="11.4" height="11.4" viewBox="0 0 11.4 11.4"><circle cx="5.7" cy="5.7" r="5.7" fill="#0f64b3"/><text x="5.7" y="9.2" font-family="Liberation Sans" font-weight="bold" font-size="9.5" fill="#fff" text-anchor="middle">?</text></svg>
<div class="a" style="left:275.0px;top:97.3px;width:799.0px;height:1.0px;background:#e8e8e8"></div>
<svg style="left:284.0px;top:108.5px" width="9" height="7" viewBox="0 0 9 7"><path d="M0.6 3.5 H8.6 M3.8 0.3 L0.6 3.5 L3.8 6.7" fill="none" stroke="#6b6b6b" stroke-width="1"/></svg>
<svg style="left:305.0px;top:108.5px" width="9" height="7" viewBox="0 0 9 7"><path d="M0.4 3.5 H8.4 M5.2 0.3 L8.4 3.5 L5.2 6.7" fill="none" stroke="#c9c9c9" stroke-width="1"/></svg>
<svg style="left:324.5px;top:110.8px" width="5" height="3" viewBox="0 0 5 3"><path d="M0.3 0.3 L2.5 2.6 L4.7 0.3" fill="none" stroke="#777" stroke-width="0.9"/></svg>
<svg style="left:337.1px;top:107.5px" width="8" height="9" viewBox="0 0 8 9"><path d="M4 8.8 V0.8 M0.6 4.2 L4 0.8 L7.4 4.2" fill="none" stroke="#5b5b5b" stroke-width="1.05"/></svg>
<div class="a" style="left:350.0px;top:101.0px;width:561.5px;height:21.5px;border:1px solid #dcdcdc"></div>
<div class="a" style="left:890.0px;top:102.0px;width:1.0px;height:19.5px;background:#e3e3e3"></div>
<svg style="left:877.0px;top:111.0px" width="6.2" height="3.8" viewBox="0 0 6.2 3.8"><path d="M0.4 0.4 L3.1 3.2 L5.8 0.4" fill="none" stroke="#4a4a4a" stroke-width="1.1"/></svg>
<svg style="left:898.0px;top:107.5px" width="9" height="9" viewBox="0 0 9 9"><path d="M6.6 2.2 A3.6 3.6 0 1 1 3.6 1" fill="none" stroke="#555" stroke-width="1"/><path d="M2.4 0 L4.4 1 L2.6 2.4" fill="none" stroke="#555" stroke-width="0.9"/></svg>
<svg style="left:353.5px;top:106.5px" width="9.2" height="11" viewBox="0 0 9.2 11"><rect x="0.3" y="0.3" width="8.6" height="10.4" fill="#f9dd86" stroke="#ecc767" stroke-width="0.6"/><rect x="7.6" y="4.95" width="1.2" height="5.5" fill="#efc665"/></svg>
<div class="a" style="left:921.0px;top:101.0px;width:144.0px;height:21.5px;border:1px solid #dcdcdc"></div>
<svg style="left:1049.5px;top:108.5px" width="9" height="9" viewBox="0 0 9 9"><circle cx="5.6" cy="3.4" r="2.7" fill="none" stroke="#555" stroke-width="1.05"/><path d="M3.6 5.4 L0.6 8.4" stroke="#555" stroke-width="1.2"/></svg>
<svg style="left:369.0px;top:109.0px" width="4" height="6" viewBox="0 0 4 6"><path d="M0.5 0.5 L3 3 L0.5 5.5" fill="none" stroke="#777" stroke-width="0.9"/></svg>
<div class="t" style="left:378.6px;top:106.5px;font-size:8.60px;color:#1a1a1a;">OP23MD</div>
<svg style="left:418.8px;top:109.0px" width="4" height="6" viewBox="0 0 4 6"><path d="M0.5 0.5 L3 3 L0.5 5.5" fill="none" stroke="#777" stroke-width="0.9"/></svg>
<div class="t" style="left:428.9px;top:106.5px;font-size:8.60px;color:#1a1a1a;">OP23MD</div>
<div class="a" style="left:275.0px;top:139.0px;width:111.0px;height:17.0px;background:#d9d9d9"></div>
<div class="a" style="left:387.0px;top:125.0px;width:1.0px;height:378.0px;background:#f0f0f0"></div>
<svg style="left:293.5px;top:142.5px" width="10" height="9" viewBox="0 0 10 9"><path d="M5.6 0.2 L6.6 3.3 L9.8 3.4 L7.2 5.3 L8.2 8.6 L5.4 6.6 L2.4 8.6 L3.5 5.3 L0.8 3.3 L4.2 3.3Z" fill="#3b8fe2"/></svg>
<div class="t" style="left:306.0px;top:142.0px;font-size:8.60px;color:#1a1a1a;">Quick access</div>
<svg style="left:297.0px;top:159.5px" width="12" height="9" viewBox="0 0 12 9"><rect x="0.4" y="0.4" width="11.2" height="8.2" fill="#2a9af2" stroke="#1a78cc" stroke-width="0.8"/><rect x="0.4" y="7" width="11.2" height="1.6" fill="#0b5ba8"/></svg>
<div class="t" style="left:312.0px;top:159.0px;font-size:8.60px;color:#1a1a1a;">Desktop</div>
<svg style="left:375.3px;top:160.5px" width="8" height="7" viewBox="0 0 8 7"><g transform="rotate(45 4 3.5)"><rect x="2.6" y="-0.5" width="2.8" height="4.2" fill="#8a8a8a"/><rect x="1.4" y="3.5" width="5.2" height="1" fill="#8a8a8a"/><rect x="3.6" y="4.5" width="0.8" height="3.5" fill="#8a8a8a"/></g></svg>
<svg style="left:297.0px;top:175.5px" width="12" height="11" viewBox="0 0 12 11"><path d="M4.3 0 H7.6 V5.6 H11.4 L5.95 11 L0.5 5.6 H4.3Z" fill="#3a8ee0"/></svg>
<div class="t" style="left:312.0px;top:176.0px;font-size:8.60px;color:#1a1a1a;">Downloads</div>
<svg style="left:375.3px;top:177.5px" width="8" height="7" viewBox="0 0 8 7"><g transform="rotate(45 4 3.5)"><rect x="2.6" y="-0.5" width="2.8" height="4.2" fill="#8a8a8a"/><rect x="1.4" y="3.5" width="5.2" height="1" fill="#8a8a8a"/><rect x="3.6" y="4.5" width="0.8" height="3.5" fill="#8a8a8a"/></g></svg>
<svg style="left:298.5px;top:192.0px" width="9" height="12" viewBox="0 0 9 12"><path d="M0.5 0.5 H6 L8.5 3 V11.5 H0.5Z" fill="#fff" stroke="#9c9c9c" stroke-width="0.9"/><rect x="2.2" y="3" width="3.6" height="2.6" fill="#8fc3e0"/><rect x="2.2" y="6.6" width="4.6" height="1" fill="#8fb8d0"/><rect x="2.2" y="8.6" width="4.6" height="1" fill="#8fb8d0"/></svg>
<div class="t" style="left:312.0px;top:193.0px;font-size:8.60px;color:#1a1a1a;">Documents</div>
<svg style="left:375.3px;top:194.5px" width="8" height="7" viewBox="0 0 8 7"><g transform="rotate(45 4 3.5)"><rect x="2.6" y="-0.5" width="2.8" height="4.2" fill="#8a8a8a"/><rect x="1.4" y="3.5" width="5.2" height="1" fill="#8a8a8a"/><rect x="3.6" y="4.5" width="0.8" height="3.5" fill="#8a8a8a"/></g></svg>
<svg style="left:297.0px;top:210.5px" width="12" height="9" viewBox="0 0 12 9"><rect x="0.4" y="0.4" width="11.2" height="8.2" fill="#eaf4fb" stroke="#9aa4ac" stroke-width="0.8"/><rect x="1.6" y="1.6" width="8.8" height="2" fill="#6aa6cf"/><path d="M1.4 5 Q5 3.8 10.6 6 V7.4 H1.4Z" fill="#2e5a55"/></svg>
<div class="t" style="left:312.0px;top:210.0px;font-size:8.60px;color:#1a1a1a;">Pictures</div>
<svg style="left:375.3px;top:211.5px" width="8" height="7" viewBox="0 0 8 7"><g transform="rotate(45 4 3.5)"><rect x="2.6" y="-0.5" width="2.8" height="4.2" fill="#8a8a8a"/><rect x="1.4" y="3.5" width="5.2" height="1" fill="#8a8a8a"/><rect x="3.6" y="4.5" width="0.8" height="3.5" fill="#8a8a8a"/></g></svg>
<svg style="left:298.5px;top:226.5px" width="9" height="10.8" viewBox="0 0 9 10.8"><rect x="0.3" y="0.3" width="8.4" height="10.2" fill="#f9dd86" stroke="#ecc767" stroke-width="0.6"/><rect x="7.4" y="4.86" width="1.2" height="5.4" fill="#efc665"/></svg>
<div class="t" style="left:312.0px;top:227.0px;font-size:8.60px;color:#1a1a1a;">3</div>
<svg style="left:375.3px;top:228.5px" width="8" height="7" viewBox="0 0 8 7"><g transform="rotate(45 4 3.5)"><rect x="2.6" y="-0.5" width="2.8" height="4.2" fill="#8a8a8a"/><rect x="1.4" y="3.5" width="5.2" height="1" fill="#8a8a8a"/><rect x="3.6" y="4.5" width="0.8" height="3.5" fill="#8a8a8a"/></g></svg>
<svg style="left:298.5px;top:243.5px" width="9" height="10.8" viewBox="0 0 9 10.8"><rect x="0.3" y="0.3" width="8.4" height="10.2" fill="#f9dd86" stroke="#ecc767" stroke-width="0.6"/><rect x="7.4" y="4.86" width="1.2" height="5.4" fill="#efc665"/></svg>
<div class="t" style="left:312.0px;top:244.0px;font-size:8.60px;color:#1a1a1a;">4</div>
<svg style="left:298.5px;top:260.0px" width="9" height="12" viewBox="0 0 9 12"><path d="M4.6 0.3 L5.6 0.3 Q6.5 2.5 8.4 4 Q8.2 6 7.4 7 Q7.6 5 5.6 3.8 V9.6 Q5.6 11.6 2.8 11.6 Q0.4 11.6 0.4 10.2 Q0.4 8.6 2.8 8.6 Q3.9 8.6 4.6 9Z" fill="#2a98e0"/></svg>
<div class="t" style="left:312.0px;top:261.0px;font-size:8.60px;color:#1a1a1a;">Music</div>
<svg style="left:298.0px;top:277.5px" width="10" height="11" viewBox="0 0 10 11"><rect x="0" y="0" width="10" height="11" fill="#39434f"/><rect x="2" y="1.2" width="6" height="4" fill="#4a8a6a"/><rect x="2" y="6" width="6" height="3.8" fill="#2f6fc0"/><rect x="0.6" y="1" width="0.8" height="9" fill="#aab"/><rect x="8.6" y="1" width="0.8" height="9" fill="#aab"/></svg>
<div class="t" style="left:312.0px;top:278.0px;font-size:8.60px;color:#1a1a1a;">Videos</div>
<svg style="left:292.0px;top:302.5px" width="12" height="8" viewBox="0 0 12 8"><path d="M2.5 7.6 Q0 7.6 0.2 5.4 Q0.5 3.6 2.6 3.6 Q3.6 0.4 6.8 0.6 Q9.4 0.8 9.8 3.4 Q12 3.6 11.9 5.6 Q11.8 7.6 9.6 7.6Z" fill="#1078d4"/></svg>
<div class="t" style="left:306.5px;top:301.5px;font-size:8.60px;color:#1a1a1a;">OneDrive</div>
<svg style="left:292.0px;top:324.0px" width="12" height="11" viewBox="0 0 12 11"><rect x="0.5" y="0.5" width="11" height="7.6" fill="#5db7f2" stroke="#2f8fd8" stroke-width="0.9"/><rect x="0" y="9.6" width="12" height="0.9" fill="#6a6a6a"/></svg>
<div class="t" style="left:306.5px;top:324.0px;font-size:8.60px;color:#1a1a1a;">This PC</div>
<svg style="left:292.0px;top:346.5px" width="12" height="11" viewBox="0 0 12 11"><rect x="0.5" y="4" width="8" height="5.6" fill="#4aa6ea" stroke="#2c86d0" stroke-width="0.8"/><path d="M5 3.5 Q7 0 11.5 1 L11.5 5 Q9 4.5 8.5 6" fill="#7cc2f2" stroke="#2c86d0" stroke-width="0.7"/><rect x="2.5" y="10" width="4" height="0.8" fill="#777"/></svg>
<div class="t" style="left:306.5px;top:347.0px;font-size:8.60px;color:#1a1a1a;">Network</div>
<div class="t" style="left:401.0px;top:131.0px;font-size:8.60px;color:#4c607a;">Name</div>
<svg style="left:486.0px;top:126.5px" width="6" height="4" viewBox="0 0 6 4"><path d="M0.4 3.4 L3 0.6 L5.6 3.4" fill="none" stroke="#888" stroke-width="0.8"/></svg>
<div class="a" style="left:581.5px;top:127.0px;width:1.0px;height:18.0px;background:#e5e5e5"></div>
<div class="a" style="left:684.5px;top:127.0px;width:1.0px;height:18.0px;background:#e5e5e5"></div>
<div class="a" style="left:769.5px;top:127.0px;width:1.0px;height:18.0px;background:#e5e5e5"></div>
<div class="a" style="left:826.0px;top:127.0px;width:1.0px;height:18.0px;background:#e5e5e5"></div>
<div class="t" style="left:587.0px;top:131.0px;font-size:8.60px;color:#4c607a;">Date modified</div>
<div class="t" style="left:688.0px;top:131.0px;font-size:8.60px;color:#4c607a;">Type</div>
<div class="t" style="left:774.5px;top:131.0px;font-size:8.60px;color:#4c607a;">Size</div>
<div class="a" style="left:398.5px;top:194.5px;width:95.0px;height:15.0px;background:#d9d9d9"></div>
<svg style="left:402.0px;top:151.5px" width="10" height="11" viewBox="0 0 10 11"><rect x="0.3" y="0.3" width="9.4" height="10.4" fill="#f9dd86" stroke="#ecc767" stroke-width="0.6"/><rect x="8.4" y="4.95" width="1.2" height="5.5" fill="#efc665"/></svg>
<div class="t" style="left:416.0px;top:152.0px;font-size:8.60px;color:#1a1a1a;">1</div>
<svg style="left:402.0px;top:166.5px" width="10" height="11" viewBox="0 0 10 11"><rect x="0.3" y="0.3" width="9.4" height="10.4" fill="#f9dd86" stroke="#ecc767" stroke-width="0.6"/><rect x="8.4" y="4.95" width="1.2" height="5.5" fill="#efc665"/></svg>
<div class="t" style="left:416.0px;top:167.0px;font-size:8.60px;color:#1a1a1a;">2</div>
<svg style="left:402.0px;top:181.5px" width="10" height="11" viewBox="0 0 10 11"><rect x="0.3" y="0.3" width="9.4" height="10.4" fill="#f9dd86" stroke="#ecc767" stroke-width="0.6"/><rect x="8.4" y="4.95" width="1.2" height="5.5" fill="#efc665"/></svg>
<div class="t" style="left:416.0px;top:182.0px;font-size:8.60px;color:#1a1a1a;">3</div>
<svg style="left:402.0px;top:196.5px" width="10" height="11" viewBox="0 0 10 11"><rect x="0.3" y="0.3" width="9.4" height="10.4" fill="#f9dd86" stroke="#ecc767" stroke-width="0.6"/><rect x="8.4" y="4.95" width="1.2" height="5.5" fill="#efc665"/></svg>
<div class="t" style="left:416.0px;top:197.0px;font-size:8.60px;color:#1a1a1a;">4</div>
<svg style="left:402.0px;top:211.5px" width="10" height="11" viewBox="0 0 10 11"><rect x="0.3" y="0.3" width="9.4" height="10.4" fill="#f9dd86" stroke="#ecc767" stroke-width="0.6"/><rect x="8.4" y="4.95" width="1.2" height="5.5" fill="#efc665"/></svg>
<div class="t" style="left:416.0px;top:212.0px;font-size:8.60px;color:#1a1a1a;">5</div>
<svg style="left:402.0px;top:226.5px" width="10" height="11" viewBox="0 0 10 11"><rect x="0.3" y="0.3" width="9.4" height="10.4" fill="#f9dd86" stroke="#ecc767" stroke-width="0.6"/><rect x="8.4" y="4.95" width="1.2" height="5.5" fill="#efc665"/></svg>
<div class="t" style="left:416.0px;top:227.0px;font-size:8.60px;color:#1a1a1a;">6</div>
<div class="t" style="left:586.5px;top:152.0px;font-size:8.60px;color:#6d6d6d;">3/20/2025 12:02 AM</div>
<div class="t" style="left:688.0px;top:152.0px;font-size:8.60px;color:#6d6d6d;">File folder</div>
<div class="t" style="left:285.0px;top:507.0px;font-size:8.60px;color:#333;">6 items</div>
<div class="a" style="left:319.0px;top:506.0px;width:0.8px;height:12.0px;background:#fafafa"></div>
<div class="t" style="left:327.5px;top:507.0px;font-size:8.60px;color:#333;">1 item selected</div>
<div class="win" style="left:488px;top:162px;width:801px;height:451px;box-shadow:0 1px 9px rgba(0,0,0,.33);"></div>
<svg style="left:496.0px;top:167.0px" width="9.4" height="12" viewBox="0 0 9.4 12"><rect x="0.3" y="0.3" width="8.8" height="11.4" fill="#f9dd86" stroke="#ecc767" stroke-width="0.6"/><rect x="7.8" y="5.4" width="1.2" height="6" fill="#efc665"/></svg>
<div class="a" style="left:511.0px;top:169.0px;width:0.8px;height:9.0px;background:#c4c4c4"></div>
<svg style="left:519.0px;top:167.0px" width="9" height="12.5" viewBox="0 0 9 12.5"><path d="M0.5 0.5 H6.5 L8.5 2.5 V12 H0.5Z" fill="#fff" stroke="#9a9a9a" stroke-width="0.9"/><path d="M2 6.5 L3.8 8.6 L7.4 3.6" fill="none" stroke="#d9463a" stroke-width="1"/></svg>
<svg style="left:534.8px;top:167.0px" width="9.6" height="12" viewBox="0 0 9.6 12"><rect x="0.3" y="0.3" width="9" height="11.4" fill="#f9dd86" stroke="#ecc767" stroke-width="0.6"/><rect x="8" y="5.4" width="1.2" height="6" fill="#efc665"/></svg>
<svg style="left:550.0px;top:171.0px" width="5" height="6" viewBox="0 0 5 6"><rect x="0" y="0" width="5" height="0.9" fill="#222"/><path d="M0 2.2 H5 L2.5 5.2Z" fill="#222"/></svg>
<div class="a" style="left:561.0px;top:168.0px;width:0.8px;height:9.0px;background:#c4c4c4"></div>
<div class="t" style="left:566.5px;top:168.5px;font-size:8.60px;color:#1a1a1a;">rt_settings</div>
<div class="a" style="left:1203.5px;top:172.6px;width:7.8px;height:1.0px;background:#3a3a3a"></div>
<div class="a" style="left:1235.0px;top:169.0px;width:7.6px;height:7.6px;border:1px solid #3a3a3a"></div>
<svg style="left:1267.8px;top:169.0px" width="7.6" height="7.6" viewBox="0 0 7.6 7.6"><path d="M0.3 0.3 L7.3 7.3 M7.3 0.3 L0.3 7.3" stroke="#3a3a3a" stroke-width="0.95"/></svg>
<div class="a" style="left:489.0px;top:184.0px;width:40.0px;height:16.5px;background:#0063b1"></div>
<div class="t" style="left:501.5px;top:187.8px;font-size:8.60px;color:#fff;">File</div>
<div class="t" style="left:538.5px;top:188.0px;font-size:8.60px;color:#3a3a3a;">Home</div>
<div class="t" style="left:580.5px;top:188.0px;font-size:8.60px;color:#3a3a3a;">Share</div>
<div class="t" style="left:621.5px;top:188.0px;font-size:8.60px;color:#3a3a3a;">View</div>
<svg style="left:1262.0px;top:189.5px" width="6" height="4" viewBox="0 0 6 4"><path d="M0.3 0.3 L3 3.2 L5.7 0.3" fill="none" stroke="#9a9a9a" stroke-width="0.9"/></svg>
<svg style="left:1274.4px;top:185.8px" width="11.4" height="11.4" viewBox="0 0 11.4 11.4"><circle cx="5.7" cy="5.7" r="5.7" fill="#0f64b3"/><text x="5.7" y="9.2" font-family="Liberation Sans" font-weight="bold" font-size="9.5" fill="#fff" text-anchor="middle">?</text></svg>
<div class="a" style="left:488.0px;top:200.3px;width:801.0px;height:1.0px;background:#e8e8e8"></div>
<svg style="left:498.0px;top:211.5px" width="9" height="7" viewBox="0 0 9 7"><path d="M0.6 3.5 H8.6 M3.8 0.3 L0.6 3.5 L3.8 6.7" fill="none" stroke="#6b6b6b" stroke-width="1"/></svg>
<svg style="left:519.0px;top:211.5px" width="9" height="7" viewBox="0 0 9 7"><path d="M0.4 3.5 H8.4 M5.2 0.3 L8.4 3.5 L5.2 6.7" fill="none" stroke="#c9c9c9" stroke-width="1"/></svg>
<svg style="left:538.5px;top:213.8px" width="5" height="3" viewBox="0 0 5 3"><path d="M0.3 0.3 L2.5 2.6 L4.7 0.3" fill="none" stroke="#777" stroke-width="0.9"/></svg>
<svg style="left:551.5px;top:210.5px" width="8" height="9" viewBox="0 0 8 9"><path d="M4 8.8 V0.8 M0.6 4.2 L4 0.8 L7.4 4.2" fill="none" stroke="#5b5b5b" stroke-width="1.05"/></svg>
<div class="a" style="left:564.0px;top:205.0px;width:562.5px;height:21.5px;border:1px solid #dcdcdc"></div>
<div class="a" style="left:1105.0px;top:206.0px;width:1.0px;height:19.5px;background:#e3e3e3"></div>
<svg style="left:1092.0px;top:214.5px" width="6.2" height="3.8" viewBox="0 0 6.2 3.8"><path d="M0.4 0.4 L3.1 3.2 L5.8 0.4" fill="none" stroke="#4a4a4a" stroke-width="1.1"/></svg>
<svg style="left:1113.0px;top:211.0px" width="9" height="9" viewBox="0 0 9 9"><path d="M6.6 2.2 A3.6 3.6 0 1 1 3.6 1" fill="none" stroke="#555" stroke-width="1"/><path d="M2.4 0 L4.4 1 L2.6 2.4" fill="none" stroke="#555" stroke-width="0.9"/></svg>
<svg style="left:568.0px;top:210.0px" width="9.2" height="11" viewBox="0 0 9.2 11"><rect x="0.3" y="0.3" width="8.6" height="10.4" fill="#f9dd86" stroke="#ecc767" stroke-width="0.6"/><rect x="7.6" y="4.95" width="1.2" height="5.5" fill="#efc665"/></svg>
<div class="a" style="left:1136.0px;top:205.0px;width:144.0px;height:21.5px;border:1px solid #dcdcdc"></div>
<svg style="left:1264.5px;top:211.5px" width="9" height="9" viewBox="0 0 9 9"><circle cx="5.6" cy="3.4" r="2.7" fill="none" stroke="#555" stroke-width="1.05"/><path d="M3.6 5.4 L0.6 8.4" stroke="#555" stroke-width="1.2"/></svg>
<svg style="left:584.0px;top:212.5px" width="4" height="6" viewBox="0 0 4 6"><path d="M0.5 0.5 L3 3 L0.5 5.5" fill="none" stroke="#777" stroke-width="0.9"/></svg>
<div class="t" style="left:593.3px;top:210.5px;font-size:8.60px;color:#1a1a1a;transform:scaleX(.9)">This PC</div>
<svg style="left:627.6px;top:212.5px" width="4" height="6" viewBox="0 0 4 6"><path d="M0.5 0.5 L3 3 L0.5 5.5" fill="none" stroke="#777" stroke-width="0.9"/></svg>
<div class="a" style="left:633.0px;top:206.0px;width:71.0px;height:19.0px;background:#f5f5f5"></div>
<div class="t" style="left:637.0px;top:210.5px;font-size:8.60px;color:#1a1a1a;">Local Disk (C:)</div>
<svg style="left:697.5px;top:212.5px" width="4" height="6" viewBox="0 0 4 6"><path d="M0.5 0.5 L3 3 L0.5 5.5" fill="none" stroke="#777" stroke-width="0.9"/></svg>
<div class="t" style="left:706.5px;top:210.5px;font-size:8.60px;color:#1a1a1a;">rt_settings</div>
<div class="t" style="left:1142.0px;top:210.5px;font-size:8.60px;color:#6d6d6d;">Search rt_settings</div>
<div class="a" style="left:601.5px;top:228.0px;width:1.0px;height:368.0px;background:#f0f0f0"></div>
<svg style="left:508.0px;top:246.5px" width="10" height="9" viewBox="0 0 10 9"><path d="M5.6 0.2 L6.6 3.3 L9.8 3.4 L7.2 5.3 L8.2 8.6 L5.4 6.6 L2.4 8.6 L3.5 5.3 L0.8 3.3 L4.2 3.3Z" fill="#3b8fe2"/></svg>
<div class="t" style="left:520.5px;top:246.0px;font-size:8.60px;color:#1a1a1a;">Quick access</div>
<svg style="left:511.5px;top:263.5px" width="12" height="9" viewBox="0 0 12 9"><rect x="0.4" y="0.4" width="11.2" height="8.2" fill="#2a9af2" stroke="#1a78cc" stroke-width="0.8"/><rect x="0.4" y="7" width="11.2" height="1.6" fill="#0b5ba8"/></svg>
<div class="t" style="left:526.5px;top:263.0px;font-size:8.60px;color:#1a1a1a;">Desktop</div>
<svg style="left:590.5px;top:264.5px" width="8" height="7" viewBox="0 0 8 7"><g transform="rotate(45 4 3.5)"><rect x="2.6" y="-0.5" width="2.8" height="4.2" fill="#8a8a8a"/><rect x="1.4" y="3.5" width="5.2" height="1" fill="#8a8a8a"/><rect x="3.6" y="4.5" width="0.8" height="3.5" fill="#8a8a8a"/></g></svg>
<svg style="left:511.5px;top:279.5px" width="12" height="11" viewBox="0 0 12 11"><path d="M4.3 0 H7.6 V5.6 H11.4 L5.95 11 L0.5 5.6 H4.3Z" fill="#3a8ee0"/></svg>
<div class="t" style="left:526.5px;top:280.0px;font-size:8.60px;color:#1a1a1a;">Downloads</div>
<svg style="left:590.5px;top:281.5px" width="8" height="7" viewBox="0 0 8 7"><g transform="rotate(45 4 3.5)"><rect x="2.6" y="-0.5" width="2.8" height="4.2" fill="#8a8a8a"/><rect x="1.4" y="3.5" width="5.2" height="1" fill="#8a8a8a"/><rect x="3.6" y="4.5" width="0.8" height="3.5" fill="#8a8a8a"/></g></svg>
<svg style="left:513.0px;top:296.0px" width="9" height="12" viewBox="0 0 9 12"><path d="M0.5 0.5 H6 L8.5 3 V11.5 H0.5Z" fill="#fff" stroke="#9c9c9c" stroke-width="0.9"/><rect x="2.2" y="3" width="3.6" height="2.6" fill="#8fc3e0"/><rect x="2.2" y="6.6" width="4.6" height="1" fill="#8fb8d0"/><rect x="2.2" y="8.6" width="4.6" height="1" fill="#8fb8d0"/></svg>
<div class="t" style="left:526.5px;top:297.0px;font-size:8.60px;color:#1a1a1a;">Documents</div>
<svg style="left:590.5px;top:298.5px" width="8" height="7" viewBox="0 0 8 7"><g transform="rotate(45 4 3.5)"><rect x="2.6" y="-0.5" width="2.8" height="4.2" fill="#8a8a8a"/><rect x="1.4" y="3.5" width="5.2" height="1" fill="#8a8a8a"/><rect x="3.6" y="4.5" width="0.8" height="3.5" fill="#8a8a8a"/></g></svg>
<svg style="left:511.5px;top:314.5px" width="12" height="9" viewBox="0 0 12 9"><rect x="0.4" y="0.4" width="11.2" height="8.2" fill="#eaf4fb" stroke="#9aa4ac" stroke-width="0.8"/><rect x="1.6" y="1.6" width="8.8" height="2" fill="#6aa6cf"/><path d="M1.4 5 Q5 3.8 10.6 6 V7.4 H1.4Z" fill="#2e5a55"/></svg>
<div class="t" style="left:526.5px;top:314.0px;font-size:8.60px;color:#1a1a1a;">Pictures</div>
<svg style="left:590.5px;top:315.5px" width="8" height="7" viewBox="0 0 8 7"><g transform="rotate(45 4 3.5)"><rect x="2.6" y="-0.5" width="2.8" height="4.2" fill="#8a8a8a"/><rect x="1.4" y="3.5" width="5.2" height="1" fill="#8a8a8a"/><rect x="3.6" y="4.5" width="0.8" height="3.5" fill="#8a8a8a"/></g></svg>
<svg style="left:513.0px;top:330.5px" width="9" height="10.8" viewBox="0 0 9 10.8"><rect x="0.3" y="0.3" width="8.4" height="10.2" fill="#f9dd86" stroke="#ecc767" stroke-width="0.6"/><rect x="7.4" y="4.86" width="1.2" height="5.4" fill="#efc665"/></svg>
<div class="t" style="left:526.5px;top:331.0px;font-size:8.60px;color:#1a1a1a;">3</div>
<svg style="left:513.0px;top:347.5px" width="9" height="10.8" viewBox="0 0 9 10.8"><rect x="0.3" y="0.3" width="8.4" height="10.2" fill="#f9dd86" stroke="#ecc767" stroke-width="0.6"/><rect x="7.4" y="4.86" width="1.2" height="5.4" fill="#efc665"/></svg>
<div class="t" style="left:526.5px;top:348.0px;font-size:8.60px;color:#1a1a1a;">4</div>
<svg style="left:513.0px;top:364.0px" width="9" height="12" viewBox="0 0 9 12"><path d="M4.6 0.3 L5.6 0.3 Q6.5 2.5 8.4 4 Q8.2 6 7.4 7 Q7.6 5 5.6 3.8 V9.6 Q5.6 11.6 2.8 11.6 Q0.4 11.6 0.4 10.2 Q0.4 8.6 2.8 8.6 Q3.9 8.6 4.6 9Z" fill="#2a98e0"/></svg>
<div class="t" style="left:526.5px;top:365.0px;font-size:8.60px;color:#1a1a1a;">Music</div>
<svg style="left:512.5px;top:382.0px" width="10" height="11" viewBox="0 0 10 11"><rect x="0" y="0" width="10" height="11" fill="#39434f"/><rect x="2" y="1.2" width="6" height="4" fill="#4a8a6a"/><rect x="2" y="6" width="6" height="3.8" fill="#2f6fc0"/><rect x="0.6" y="1" width="0.8" height="9" fill="#aab"/><rect x="8.6" y="1" width="0.8" height="9" fill="#aab"/></svg>
<div class="t" style="left:526.5px;top:382.5px;font-size:8.60px;color:#1a1a1a;">Videos</div>
<div class="a" style="left:489.0px;top:424.5px;width:111.0px;height:17.0px;background:#d9d9d9"></div>
<svg style="left:506.0px;top:406.0px" width="12" height="8" viewBox="0 0 12 8"><path d="M2.5 7.6 Q0 7.6 0.2 5.4 Q0.5 3.6 2.6 3.6 Q3.6 0.4 6.8 0.6 Q9.4 0.8 9.8 3.4 Q12 3.6 11.9 5.6 Q11.8 7.6 9.6 7.6Z" fill="#1078d4"/></svg>
<div class="t" style="left:521.0px;top:405.0px;font-size:8.60px;color:#1a1a1a;">OneDrive</div>
<svg style="left:506.0px;top:428.0px" width="12" height="11" viewBox="0 0 12 11"><rect x="0.5" y="0.5" width="11" height="7.6" fill="#5db7f2" stroke="#2f8fd8" stroke-width="0.9"/><rect x="0" y="9.6" width="12" height="0.9" fill="#6a6a6a"/></svg>
<div class="t" style="left:521.0px;top:428.0px;font-size:8.60px;color:#1a1a1a;">This PC</div>
<svg style="left:506.0px;top:450.0px" width="12" height="11" viewBox="0 0 12 11"><rect x="0.5" y="4" width="8" height="5.6" fill="#4aa6ea" stroke="#2c86d0" stroke-width="0.8"/><path d="M5 3.5 Q7 0 11.5 1 L11.5 5 Q9 4.5 8.5 6" fill="#7cc2f2" stroke="#2c86d0" stroke-width="0.7"/><rect x="2.5" y="10" width="4" height="0.8" fill="#777"/></svg>
<div class="t" style="left:521.0px;top:450.5px;font-size:8.60px;color:#1a1a1a;">Network</div>
<div class="a" style="left:602.5px;top:231.0px;width:193.5px;height:18.0px;background:#d9ebf9"></div>
<div class="a" style="left:785.0px;top:231.0px;width:1.0px;height:18.0px;background:#c6dcef"></div>
<svg style="left:787.5px;top:238.0px" width="5" height="3.5" viewBox="0 0 5 3.5"><path d="M0.4 0.4 L2.5 2.8 L4.6 0.4" fill="none" stroke="#5a7590" stroke-width="0.8"/></svg>
<svg style="left:700.5px;top:230.8px" width="6" height="4" viewBox="0 0 6 4"><path d="M0.4 3.4 L3 0.6 L5.6 3.4" fill="none" stroke="#606a74" stroke-width="0.9"/></svg>
<div class="t" style="left:614.5px;top:236.0px;font-size:8.60px;color:#4c607a;">Name</div>
<div class="a" style="left:898.5px;top:231.0px;width:1.0px;height:18.0px;background:#e5e5e5"></div>
<div class="a" style="left:983.5px;top:231.0px;width:1.0px;height:18.0px;background:#e5e5e5"></div>
<div class="a" style="left:1040.5px;top:231.0px;width:1.0px;height:18.0px;background:#e5e5e5"></div>
<div class="t" style="left:800.5px;top:236.0px;font-size:8.60px;color:#4c607a;">Date modified</div>
<div class="t" style="left:902.5px;top:236.0px;font-size:8.60px;color:#4c607a;">Type</div>
<div class="t" style="left:988.5px;top:236.0px;font-size:8.60px;color:#4c607a;">Size</div>
<svg style="left:616.0px;top:253.5px" width="10" height="13" viewBox="0 0 10 13"><path d="M0.6 0.6 L6.6 0.6 L9.4 3.4 L9.4 12.4 L0.6 12.4Z" fill="#fff" stroke="#8c8c8c" stroke-width="0.8"/><path d="M0.8 0.8 L9.2 9.6 M3 12 L5 8.5 L7 12" fill="none" stroke="#8c8c8c" stroke-width="0.7"/></svg>
<div class="t" style="left:630.0px;top:256.0px;font-size:8.60px;color:#1a1a1a;">fingerprint17029.c2v</div>
<div class="t" style="left:800.5px;top:256.0px;font-size:8.60px;color:#6d6d6d;">3/21/2025 1:47 AM</div>
<div class="t" style="left:902.5px;top:256.0px;font-size:8.60px;color:#6d6d6d;">C2V File</div>
<div class="t" style="left:1010.0px;top:256.0px;font-size:8.60px;color:#6d6d6d;width:25px;text-align:right;transform-origin:100% 0">1 KB</div>
<div class="t" style="left:499.5px;top:599.5px;font-size:8.60px;color:#333;">1 item</div>
<div class="a" style="left:529.0px;top:598.0px;width:0.8px;height:12.0px;background:#fafafa"></div>
<div class="a" style="left:1253.7px;top:596.0px;width:15.5px;height:16.0px;background:#d3ecf8;border:1px solid #8ec6d6"></div>
<svg style="left:1256.5px;top:600.0px" width="10" height="8" viewBox="0 0 10 8"><g fill="#8aa0b4"><rect x="0" y="0" width="2" height="8" rx="1" fill="none" stroke="#9aa" stroke-width="0.6"/><rect x="3.5" y="0.5" width="2.6" height="0.9"/><rect x="7" y="0.5" width="2.6" height="0.9"/><rect x="3.5" y="3.5" width="2.6" height="0.9"/><rect x="7" y="3.5" width="2.6" height="0.9"/><rect x="3.5" y="6.5" width="2.6" height="0.9"/><rect x="7" y="6.5" width="2.6" height="0.9"/></g></svg>
<svg style="left:1272.0px;top:599.5px" width="9.5" height="8" viewBox="0 0 9.5 8"><rect x="0.4" y="0.4" width="8.7" height="7.2" fill="#eef4fa" stroke="#b8a8a8" stroke-width="0.7"/><rect x="1.5" y="1.5" width="6.5" height="1.2" fill="#8ab"/><path d="M1.5 4 L7.6 6.2 H1.5Z" fill="#234"/></svg>
<div class="a" style="left:0.0px;top:740.0px;width:1366.0px;height:28.0px;background:linear-gradient(90deg,#223641 0%,#21343f 40%,#1f2f40 70%,#1c2a40 100%)"></div>
<svg style="left:11.0px;top:748.0px" width="12" height="12" viewBox="0 0 12 12"><g fill="#fff"><path d="M0 1.7 L4.9 1 V5.6 H0Z"/><path d="M5.6 0.9 L12 0 V5.6 H5.6Z"/><path d="M0 6.3 H4.9 V11 L0 10.3Z"/><path d="M5.6 6.3 H12 V12 L5.6 11.1Z"/></g></svg>
<div class="a" style="left:34.5px;top:740.0px;width:244.5px;height:28.0px;background:#f2f2f2"></div>
<svg style="left:42.5px;top:748.0px" width="12.5" height="12" viewBox="0 0 12.5 12"><circle cx="7.6" cy="4.9" r="4" fill="none" stroke="#333" stroke-width="1.1"/><path d="M4.8 7.8 L0.6 11.8" stroke="#333" stroke-width="1.3"/></svg>
<div class="t" style="left:62.8px;top:749.5px;font-size:10.30px;color:#4a4a4a;transform:none;-webkit-text-stroke:0">Type here to search</div>
<svg style="left:222.0px;top:740.0px" width="57" height="28" viewBox="0 0 57 28"><path d="M33 0 H54 Q51 10 52 28 H35 Q37 12 33 0Z" fill="#c08f68"/><path d="M38 2 Q40 14 39 28 M46 0 Q47 14 46 28" stroke="#a06e48" stroke-width="1" fill="none"/><path d="M30 6 Q32 12 36 14 M54 6 Q51 12 53 18" stroke="#9c7050" stroke-width="1.3" fill="none"/><path d="M18 20 V28 M18 22 Q12 20 8 17 M18 22 Q24 20 28 16" stroke="#8c6040" stroke-width="1.4" fill="none"/><g fill="#8fae22"><ellipse cx="10" cy="7" rx="5.5" ry="4"/><ellipse cx="20" cy="6" rx="6" ry="4.5"/><ellipse cx="8" cy="14" rx="7" ry="4.5"/><ellipse cx="20" cy="14" rx="9" ry="5"/><ellipse cx="28" cy="10" rx="5" ry="4.5"/></g><g fill="#a8c83a"><ellipse cx="11" cy="6" rx="3.5" ry="2.5"/><ellipse cx="21" cy="5" rx="3.5" ry="2.5"/><ellipse cx="19" cy="12" rx="5" ry="2.5"/></g></svg>
<svg style="left:289.5px;top:747.5px" width="13" height="11" viewBox="0 0 13 11"><g fill="none" stroke="#fff" stroke-width="1"><rect x="1.5" y="2" width="6.5" height="7"/><path d="M0 0.5 H9.5 M0 10.5 H9.5"/></g><rect x="11" y="0" width="1.6" height="1.6" fill="#fff"/><rect x="11" y="3" width="1.4" height="8" fill="#fff"/></svg>
<svg style="left:323.0px;top:745.0px" width="18" height="17.5" viewBox="0 0 18 17.5"><defs><linearGradient id="teg" x1="0" y1="0.2" x2="1" y2="0.6"><stop offset="0" stop-color="#35b6e8"/><stop offset="1" stop-color="#66dc5a"/></linearGradient><linearGradient id="teb" x1="0" y1="0" x2="0.6" y2="1"><stop offset="0" stop-color="#1a8ae0"/><stop offset="1" stop-color="#0c4fa8"/></linearGradient></defs><path d="M1 9 Q1 0.5 9 0.5 Q17.5 0.5 17.8 8 Q18 11.5 13 11.5 Q9.2 11.5 9.2 9.2 Q9.2 6.2 6.3 6.2 Q2 6.2 1 9Z" fill="url(#teg)"/><path d="M1 9 Q1.5 5.6 5.8 5.4 Q10 5.4 11 8.4 Q6.8 7.8 7.3 11.5 Q8.4 15.6 17.5 13.6 Q14.7 17.3 9.2 17.5 Q1 17.3 1 9Z" fill="url(#teb)"/></svg>
<div class="a" style="left:350.0px;top:740.0px;width:31.5px;height:28.0px;background:#4c5f68"></div>
<div class="a" style="left:381.5px;top:740.0px;width:2.0px;height:28.0px;background:#33434c"></div>
<div class="a" style="left:350.0px;top:766.0px;width:31.5px;height:2.0px;background:#8fc3f0"></div>
<svg style="left:358.5px;top:746.0px" width="16.5" height="14.5" viewBox="0 0 16.5 14.5"><path d="M0 1 H6 L7.5 2.5 H16.5 V14.5 H0Z" fill="#f0c040"/><rect x="0" y="4" width="16.5" height="10.5" fill="#f8d868"/><path d="M4.5 8.5 H12 V14.5 H10 V11 H6.5 V14.5 H4.5Z" fill="#3d8fd0"/></svg>
<svg style="left:393.0px;top:745.5px" width="17" height="16.5" viewBox="0 0 17 16.5"><path d="M5 4 Q5 0.6 8.5 0.6 Q12 0.6 12 4" fill="none" stroke="#ddd" stroke-width="1.2"/><rect x="0.5" y="4" width="16" height="12.3" rx="1" fill="#fff"/><rect x="4.5" y="6.5" width="3.6" height="3.4" fill="#f25022"/><rect x="8.8" y="6.5" width="3.6" height="3.4" fill="#7fba00"/><rect x="4.5" y="10.5" width="3.6" height="3.4" fill="#00a4ef"/><rect x="8.8" y="10.5" width="3.6" height="3.4" fill="#ffb900"/></svg>
<svg style="left:428.0px;top:746.4px" width="18" height="14" viewBox="0 0 18 14"><path d="M0 4.6 L9 0 L18 4.6 V14 H0Z" fill="#fff"/><path d="M2 4.4 H16 L11 7.6 L13.8 11.6 L7 6.8Z" fill="#1d2a33"/></svg>
<svg style="left:463.7px;top:745.5px" width="16.2" height="16" viewBox="0 0 16.2 16"><circle cx="8.1" cy="8" r="7.6" fill="#1b1617" stroke="#b8c4c8" stroke-width="0.8"/><path d="M7.7 7.8 Q3.9 5.7 4.2 1.9 M7.7 7.8 Q11.5 5.7 14.5 8.4 M7.7 7.8 Q8.3 12.7 4.2 13.5" fill="none" stroke="#cfcfcf" stroke-width="0.9"/><circle cx="12.1" cy="11.9" r="4.4" fill="#f00000"/></svg>
<div class="a" style="left:458.0px;top:766.0px;width:28.0px;height:2.0px;background:#8fc3f0"></div>
<svg style="left:498.0px;top:745.5px" width="16" height="15.5" viewBox="0 0 16 15.5"><path d="M3 0.5 L14 2.5 L15.5 14.5 L0.5 14.5Z" fill="#bfe0e8" stroke="#d8f0f0" stroke-width="0.6"/><path d="M3 0.5 L14 2.5 L12 9 L2 12Z" fill="#7ec4d8"/><path d="M0.5 14.5 L15.5 14.5 L14 15.3 L1 15.3Z" fill="#e0eef0"/></svg>
<div class="a" style="left:492.5px;top:766.0px;width:28.0px;height:2.0px;background:#8fc3f0"></div>
<div class="t" style="right:3.5px;top:705.0px;font-size:8.6px;color:#fff;text-align:right;transform:scaleX(1);transform-origin:100% 0">Test Mode</div>
<div class="t" style="right:3.5px;top:716.7px;font-size:8.6px;color:#fff;text-align:right;transform:scaleX(0.963);transform-origin:100% 0">Windows 10 Pro</div>
<div class="t" style="right:3.5px;top:728.4px;font-size:8.6px;color:#fff;text-align:right;transform:scaleX(0.924);transform-origin:100% 0">Build 19041.vb_release.191206-1406</div>
<svg style="left:1183.0px;top:748.0px" width="18" height="12" viewBox="0 0 18 12"><rect x="0.6" y="0.6" width="16.4" height="10.8" rx="1.5" fill="none" stroke="#d8d8d8" stroke-width="1.1"/><rect x="3" y="4" width="4" height="5" fill="none" stroke="#ccc" stroke-width="0.9"/><circle cx="5" cy="6.5" r="1" fill="#ccc"/><path d="M9 3.5 H15 M9 5.5 H15 M9 7.5 H15 M14.5 0.6 V11.4" stroke="#ccc" stroke-width="0.8"/></svg>
<svg style="left:1219.0px;top:750.5px" width="9" height="6" viewBox="0 0 9 6"><path d="M0.5 5.5 L4.5 1 L8.5 5.5" fill="none" stroke="#eee" stroke-width="1.1"/></svg>
<svg style="left:1236.0px;top:748.0px" width="9" height="12" viewBox="0 0 9 12"><rect x="0.8" y="3" width="5.5" height="6" rx="1" fill="none" stroke="#ddd" stroke-width="1"/><path d="M6.5 5 L8.5 4 V8 L6.5 7" fill="none" stroke="#ddd" stroke-width="0.9"/><path d="M1 1.5 Q3.5 0 6 1.5 M1 10.5 Q3.5 12 6 10.5" fill="none" stroke="#ccc" stroke-width="0.8"/></svg>
<svg style="left:1251.0px;top:748.0px" width="12" height="12" viewBox="0 0 12 12"><rect x="2.5" y="1" width="9" height="7" fill="none" stroke="#ddd" stroke-width="1"/><path d="M7 8 V11 M4.5 11 H9.5 M0.5 2 H3 M1.6 2 V6" stroke="#ddd" stroke-width="1" fill="none"/></svg>
<svg style="left:1268.0px;top:748.0px" width="13" height="12" viewBox="0 0 13 12"><path d="M0.6 4 H3 L6.4 1 V11 L3 8 H0.6Z" fill="none" stroke="#ddd" stroke-width="1"/><path d="M8 4 Q9 6 8 8 M9.8 2.6 Q11.6 6 9.8 9.4 M11.4 1 Q13.8 6 11.4 11" fill="none" stroke="#ddd" stroke-width="0.9"/></svg>
<div class="t" style="left:1286px;top:742.5px;width:40px;text-align:center;font-size:9px;line-height:10px;color:#fff;transform:scaleX(.89);transform-origin:50% 0">1:47 AM</div>
<div class="t" style="left:1285.5px;top:754.7px;width:40px;text-align:center;font-size:9px;line-height:10px;color:#fff;transform:scaleX(.925);transform-origin:50% 0">3/21/2025</div>
<svg style="left:1336.0px;top:748.0px" width="18" height="16" viewBox="0 0 18 16"><path d="M0.6 0.6 H13.4 V10 H5 L2.5 12.5 V10 H0.6Z" fill="#fff"/><path d="M3 3 H11 M3 5.3 H11 M3 7.6 H9" stroke="#222" stroke-width="0.8"/><circle cx="12.2" cy="11.3" r="5.6" fill="#262626" stroke="#8a8f96" stroke-width="0.7"/><text x="12.2" y="14.5" font-family="Liberation Sans" font-weight="bold" font-size="8.5" fill="#fff" text-anchor="middle">7</text></svg>
<div class="a" style="left:1362.0px;top:740.0px;width:1.0px;height:28.0px;background:#555f6a"></div>
</body></html>
